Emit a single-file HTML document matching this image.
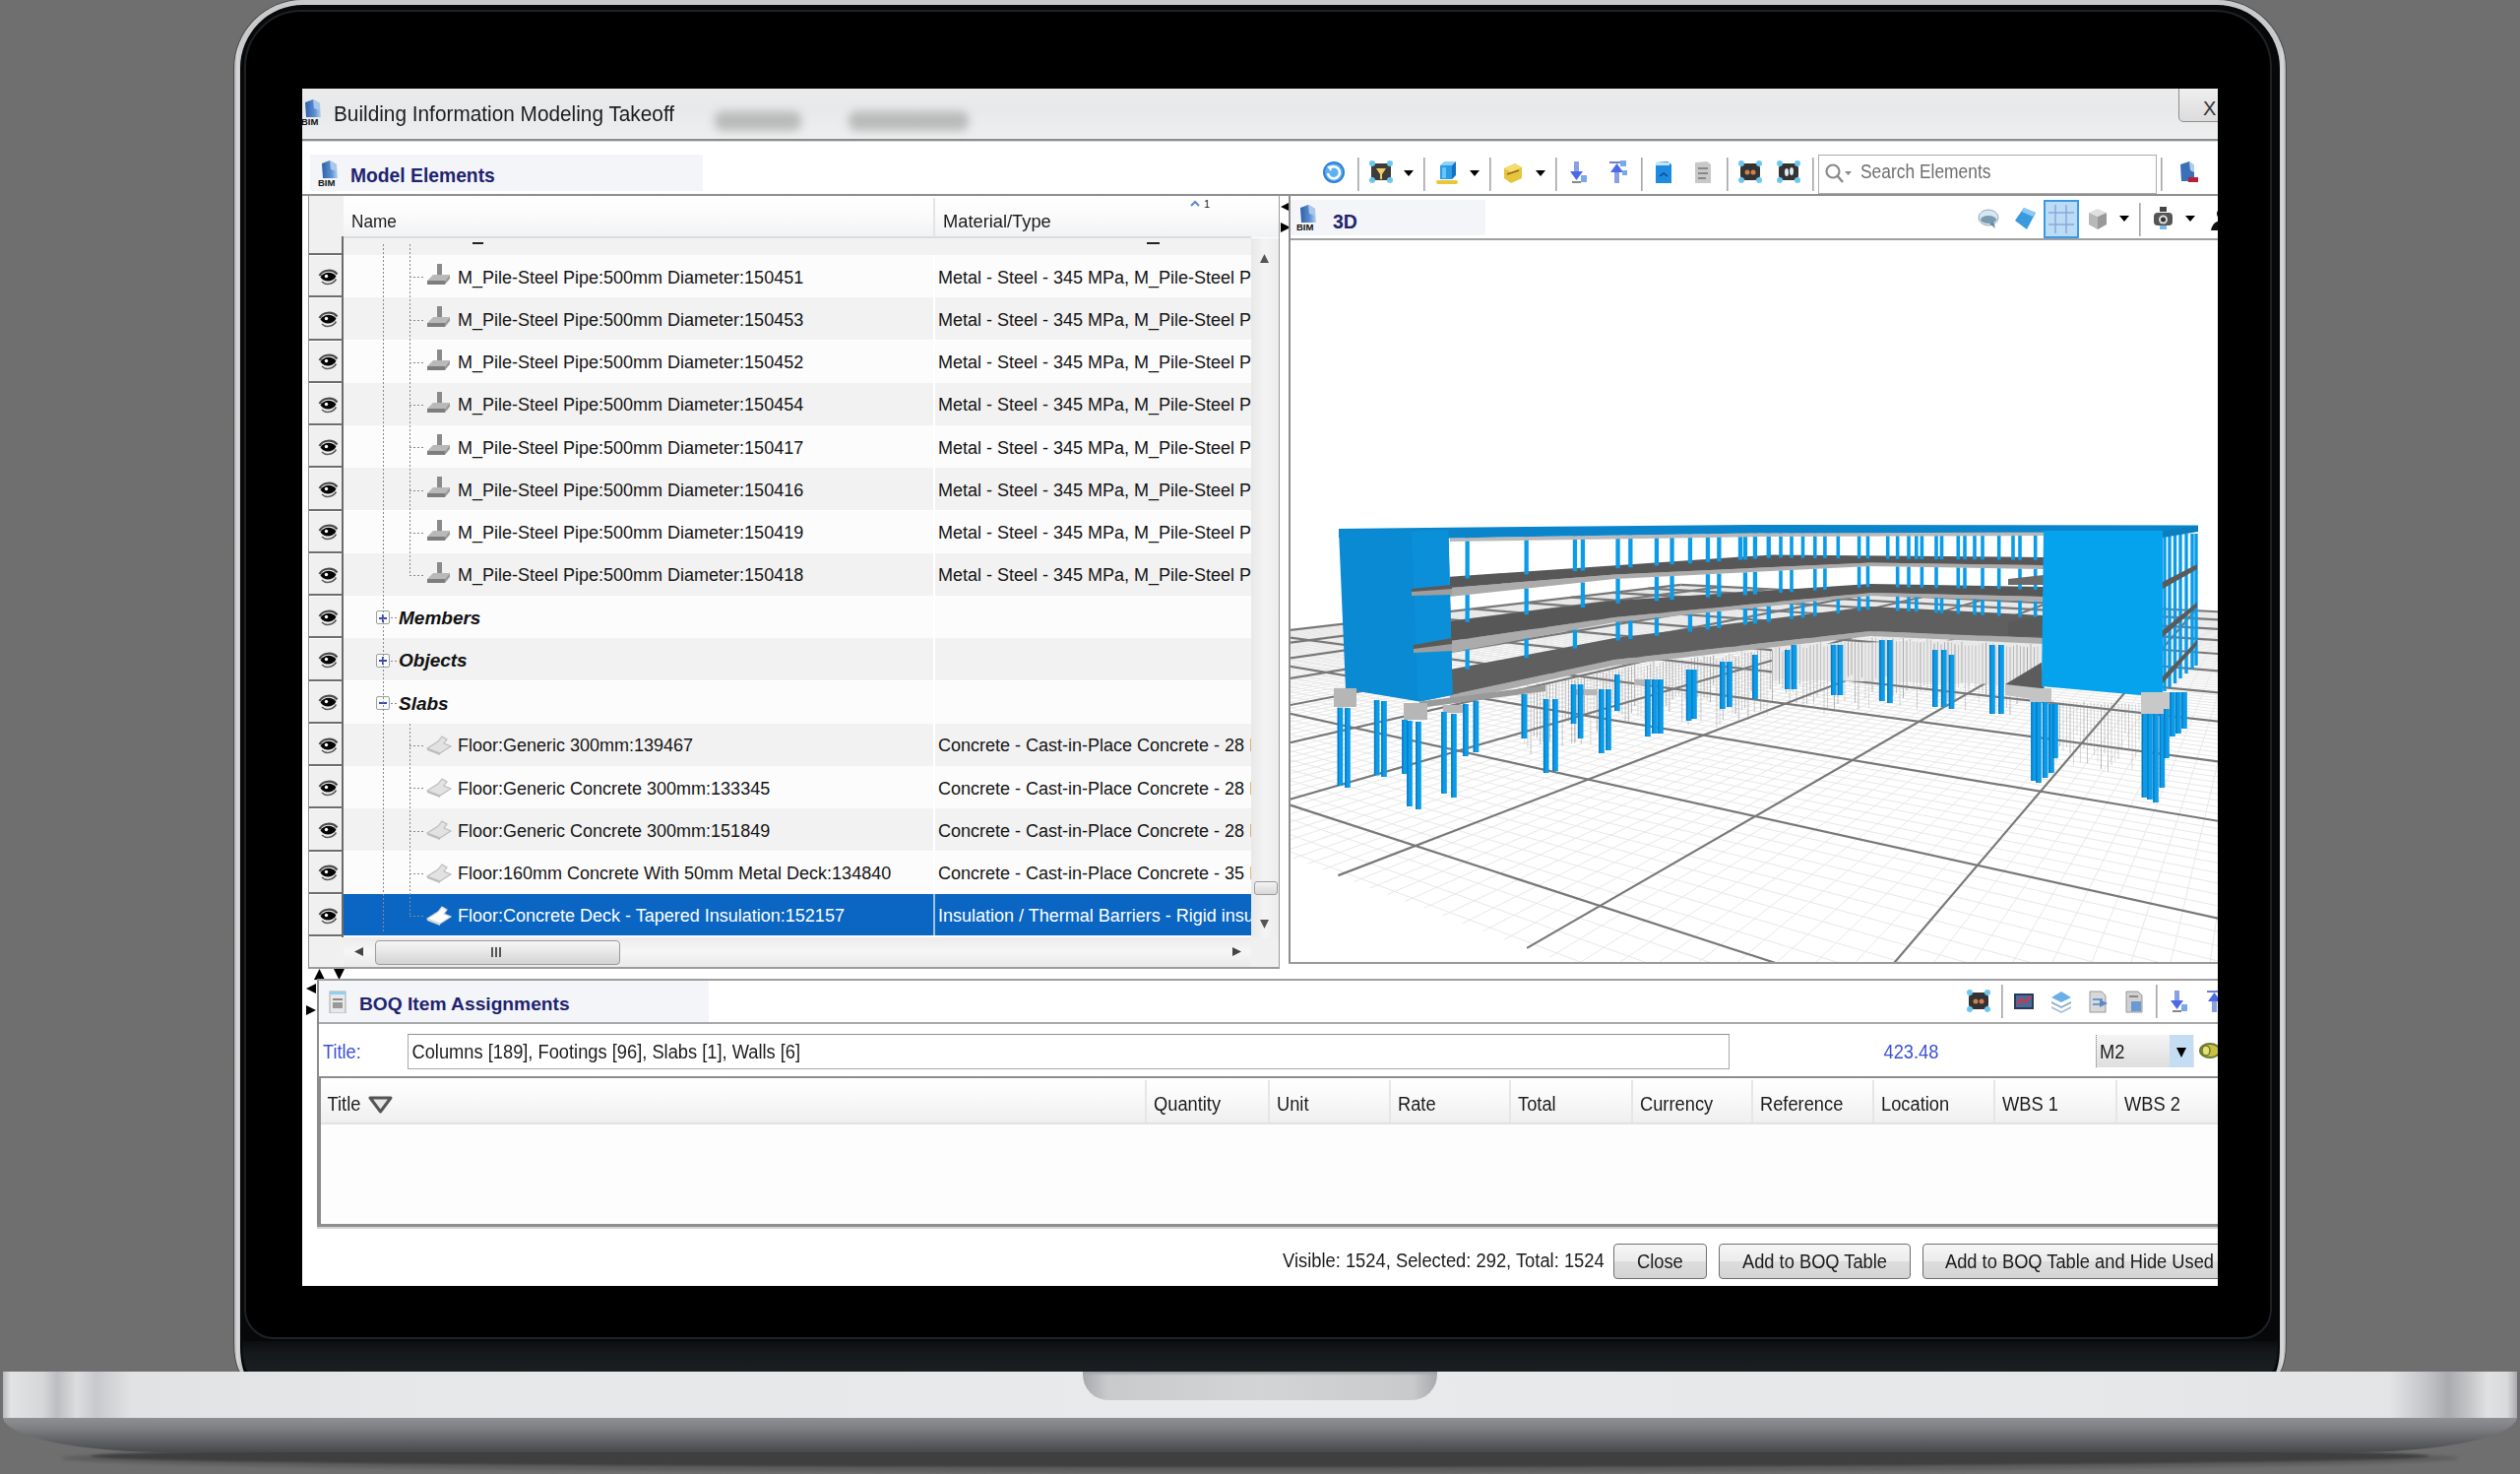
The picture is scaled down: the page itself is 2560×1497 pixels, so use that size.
<!DOCTYPE html>
<html><head><meta charset="utf-8"><title>BIM Takeoff</title>
<style>
html,body{margin:0;padding:0;}
body{width:2560px;height:1497px;overflow:hidden;position:relative;background:#6f6f6f;font-family:"Liberation Sans",sans-serif;}
div,span,svg{position:absolute;}
.t{white-space:pre;line-height:1;}
</style></head><body>
<div style="position:absolute;left:238px;top:0;width:2084px;height:1400px;border-radius:70px 70px 14px 14px/70px 70px 36px 36px;box-shadow:0 0 0 1px rgba(45,45,45,0.55);background:linear-gradient(90deg,#a9aaad 0,#d8d9db 3px,#c9cacc 6px,#c9cacc calc(100% - 6px),#d8d9db calc(100% - 3px),#a9aaad 100%);"></div>
<div style="position:absolute;left:244px;top:5px;width:2072px;height:1395px;border-radius:64px 64px 10px 10px/64px 64px 32px 32px;background:#070809;"></div>
<div style="position:absolute;left:248px;top:10px;width:2060px;height:1350px;border-radius:58px 58px 30px 30px;border:2px solid #1f2124;box-sizing:border-box;background:#000;"></div>
<div style="position:absolute;left:246px;top:1362px;width:2068px;height:32px;background:linear-gradient(180deg,#0c0d0f 0,#16191c 40%,#1b1e22 100%);border-radius:0 0 8px 8px/0 0 30px 30px;"></div>
<div style="position:absolute;left:62px;top:1466px;width:2436px;height:30px;border-radius:50%;background:#5e5e5e;filter:blur(1.5px);"></div>
<div style="position:absolute;left:92px;top:1468px;width:2376px;height:22px;border-radius:50%;background:#3f3f3f;filter:blur(1px);"></div>
<div style="position:absolute;left:3px;top:1393px;width:2554px;height:82px;border-radius:0 0 170px 170px/0 0 36px 36px;background:linear-gradient(180deg,#8e8f93 0,#8e8f93 57%,#7f8084 70%,#626367 85%,#48494d 100%);"></div>
<div style="position:absolute;left:3px;top:1393px;width:2554px;height:47px;background:linear-gradient(90deg,#b9babd 0,#e2e3e5 8px,#d6d7d9 40px,#bdbec1 55px,#dcdddf 75px,#c8c9cc 95px,#e1e2e4 130px,#e6e7e9 400px,#e9eaeb 50%,#e6e7e9 calc(100% - 400px),#e3e4e6 calc(100% - 130px),#c2c3c6 calc(100% - 90px),#a9abae calc(100% - 70px),#c9cacc calc(100% - 45px),#e0e1e3 calc(100% - 30px),#d9dadc calc(100% - 10px),#a9aaad 100%);"></div>
<div style="position:absolute;left:1100px;top:1393px;width:360px;height:29px;border-radius:0 0 26px 26px;background:linear-gradient(90deg,#a8a9ac 0,#c9cacc 25px,#d3d4d5 50%,#c9cacc calc(100% - 25px),#a8a9ac 100%);"></div>
<div style="position:absolute;left:1100px;top:1393px;width:360px;height:4px;background:linear-gradient(180deg,#9fa0a3,rgba(0,0,0,0));"></div>
<div style="position:absolute;left:307px;top:90px;width:1946px;height:1216px;background:#fff;overflow:hidden;"></div>
<div style="left:0;top:0;width:2560px;height:1497px;clip-path:inset(90px 307px 191px 307px)"><div style="left:307.0px;top:90.0px;width:1946.0px;height:52.0px;background:linear-gradient(180deg,#ebebec 0,#e8e9ea 40%,#eeeff0 100%);"></div>
<div style="left:307.0px;top:141.0px;width:1946.0px;height:2.0px;background:#8c8c8c;"></div>
<div style="left:307.0px;top:143.0px;width:1946.0px;height:1.0px;background:#d9d9d9;"></div>
<svg style="left:305px;top:100px" width="24" height="28" viewBox="0 0 24 28"><defs><linearGradient id="bg305100" x1="0" y1="0" x2="1" y2="0"><stop offset="0" stop-color="#2f5fa8"/><stop offset="0.6" stop-color="#5b8fd0"/><stop offset="1" stop-color="#b9d4ee"/></linearGradient></defs><path d="M5 4 L13 1 L20 5 L21 19 L6 19 Z" fill="url(#bg305100)"/><path d="M13 1 L14 10 L20 12 L20 5 Z" fill="#a9c8ea"/><text x="1" y="27" font-family="Liberation Sans" font-weight="bold" font-size="9.5" fill="#111">BIM</text></svg>
<div class="t" style="left:339.0px;top:106.4px;font-size:20.8px;color:#1c1c1c;font-weight:normal;font-style:normal;transform:scaleY(1.1);transform-origin:0 17.61px;">Building Information Modeling Takeoff</div>
<div style="left:726.0px;top:113.0px;width:88.0px;height:20.0px;background:#8a8a8a;filter:blur(5px);border-radius:8px;opacity:0.5"></div>
<div style="left:862.0px;top:113.0px;width:122.0px;height:20.0px;background:#8a8a8a;filter:blur(5px);border-radius:8px;opacity:0.5"></div>
<div style="left:2213.0px;top:88.0px;width:50.0px;height:36.0px;background:linear-gradient(180deg,#f0f0f0,#dcdcdc);border:1px solid #8e8e8e;border-radius:0 0 0 5px;box-sizing:border-box"></div>
<div class="t" style="left:2238.0px;top:100.1px;font-size:20px;color:#333;font-weight:normal;font-style:normal;">X</div>
<div style="left:315.0px;top:157.0px;width:399.0px;height:37.0px;background:#f3f5f8;"></div>
<svg style="left:322px;top:162px" width="24" height="28" viewBox="0 0 24 28"><defs><linearGradient id="bg322162" x1="0" y1="0" x2="1" y2="0"><stop offset="0" stop-color="#2f5fa8"/><stop offset="0.6" stop-color="#5b8fd0"/><stop offset="1" stop-color="#b9d4ee"/></linearGradient></defs><path d="M5 4 L13 1 L20 5 L21 19 L6 19 Z" fill="url(#bg322162)"/><path d="M13 1 L14 10 L20 12 L20 5 Z" fill="#a9c8ea"/><text x="1" y="27" font-family="Liberation Sans" font-weight="bold" font-size="9.5" fill="#111">BIM</text></svg>
<div class="t" style="left:356.0px;top:168.7px;font-size:19.3px;color:#1f2370;font-weight:bold;font-style:normal;">Model Elements</div>
<svg style="left:1343px;top:163px" width="24" height="24" viewBox="0 0 24 24"><circle cx="12" cy="12" r="11" fill="#2e7fd8"/><circle cx="12" cy="12" r="9" fill="#5fb0f0"/><path d="M6 13 A6 6 0 1 0 9 7" stroke="#fff" stroke-width="2.5" fill="none"/><polygon points="5,6 11,5 9,11" fill="#fff"/></svg>
<div style="left:1379.0px;top:160.0px;width:2.0px;height:34.0px;background:linear-gradient(90deg,#9a9a9a,#d5d5d5);"></div>
<svg style="left:1391px;top:163px" width="24" height="24" viewBox="0 0 24 24"><rect x="2" y="3" width="20" height="17" rx="4" fill="#3c3c3c"/><circle cx="3" cy="3" r="3" fill="#6cc7f0"/><circle cx="21" cy="3" r="3" fill="#6cc7f0"/><circle cx="3" cy="20" r="3" fill="#6cc7f0"/><circle cx="21" cy="20" r="3" fill="#6cc7f0"/><polygon points="7,8 17,8 13,14 13,19 11,19 11,14" fill="#f0d060"/></svg>
<svg style="left:1426px;top:173px" width="10" height="6" viewBox="0 0 10 6"><polygon points="0,0 10,0 5,6" fill="#000"/></svg>
<div style="left:1446.0px;top:160.0px;width:2.0px;height:34.0px;background:linear-gradient(90deg,#9a9a9a,#d5d5d5);"></div>
<svg style="left:1458px;top:163px" width="24" height="24" viewBox="0 0 24 24"><polygon points="5,5 9,1 21,1 17,5" fill="#8fd0f8"/><rect x="5" y="5" width="12" height="14" fill="#2a9be8"/><polygon points="17,5 21,1 21,15 17,19" fill="#1470c0"/><rect x="7" y="7" width="4" height="11" fill="#6cc4f4"/><rect x="1" y="20" width="22" height="4" rx="2" fill="#e8c83a"/></svg>
<svg style="left:1493px;top:173px" width="10" height="6" viewBox="0 0 10 6"><polygon points="0,0 10,0 5,6" fill="#000"/></svg>
<div style="left:1513.0px;top:160.0px;width:2.0px;height:34.0px;background:linear-gradient(90deg,#9a9a9a,#d5d5d5);"></div>
<svg style="left:1525px;top:163px" width="24" height="24" viewBox="0 0 24 24"><polygon points="3,8 14,3 21,7 21,18 10,23 3,18" fill="#e6c43c"/><polygon points="3,8 14,3 21,7 10,12" fill="#f6dc70"/><path d="M6 14 L18 10" stroke="#8a6a20" stroke-width="1.5"/></svg>
<svg style="left:1560px;top:173px" width="10" height="6" viewBox="0 0 10 6"><polygon points="0,0 10,0 5,6" fill="#000"/></svg>
<div style="left:1580.0px;top:160.0px;width:2.0px;height:34.0px;background:linear-gradient(90deg,#9a9a9a,#d5d5d5);"></div>
<svg style="left:1590px;top:163px" width="24" height="24" viewBox="0 0 24 24"><rect x="9" y="1" width="5" height="12" fill="#8aa0e0"/><polygon points="5,11 18,11 11.5,20" fill="#4a6ae8"/><rect x="7" y="21" width="9" height="2" fill="#888"/><rect x="16" y="15" width="6" height="7" fill="#7aa8e8"/></svg>
<svg style="left:1631px;top:163px" width="24" height="24" viewBox="0 0 24 24"><rect x="9" y="11" width="5" height="12" fill="#8aa0e0"/><polygon points="5,12 18,12 11.5,3" fill="#4a6ae8"/><rect x="4" y="1" width="14" height="2" fill="#7080d0"/><rect x="15" y="0" width="6" height="6" fill="#7aa8e8"/><rect x="17" y="10" width="5" height="5" fill="#7aa8e8"/></svg>
<div style="left:1667.0px;top:160.0px;width:2.0px;height:34.0px;background:linear-gradient(90deg,#9a9a9a,#d5d5d5);"></div>
<svg style="left:1678px;top:163px" width="24" height="24" viewBox="0 0 24 24"><polygon points="4,2 16,1 20,4 20,23 4,23" fill="#1e8ae0"/><rect x="4" y="2" width="14" height="3" fill="#c8e4f8"/><path d="M8 16 L12 13 L16 16" stroke="#0a4a90" stroke-width="1.5" fill="none"/></svg>
<svg style="left:1718px;top:163px" width="24" height="24" viewBox="0 0 24 24"><polygon points="4,2 16,1 20,4 20,23 4,23" fill="#c8c8c8"/><rect x="7" y="7" width="10" height="2" fill="#888"/><rect x="7" y="12" width="10" height="2" fill="#888"/><rect x="7" y="17" width="8" height="2" fill="#888"/></svg>
<div style="left:1754.0px;top:160.0px;width:2.0px;height:34.0px;background:linear-gradient(90deg,#9a9a9a,#d5d5d5);"></div>
<svg style="left:1766px;top:163px" width="24" height="24" viewBox="0 0 24 24"><rect x="2" y="3" width="20" height="17" rx="5" fill="#333"/><circle cx="3" cy="3" r="3" fill="#6cc7f0"/><circle cx="21" cy="3" r="3" fill="#6cc7f0"/><circle cx="3" cy="20" r="3" fill="#6cc7f0"/><circle cx="21" cy="20" r="3" fill="#6cc7f0"/><circle cx="9" cy="12" r="2.5" fill="#d08050"/><circle cx="15" cy="12" r="2.5" fill="#d08050"/></svg>
<svg style="left:1805px;top:163px" width="24" height="24" viewBox="0 0 24 24"><rect x="2" y="3" width="20" height="17" rx="5" fill="#333"/><circle cx="3" cy="3" r="3" fill="#6cc7f0"/><circle cx="21" cy="3" r="3" fill="#6cc7f0"/><circle cx="3" cy="20" r="3" fill="#6cc7f0"/><circle cx="21" cy="20" r="3" fill="#6cc7f0"/><ellipse cx="10" cy="12" rx="2" ry="4" fill="#e0e8f0"/><ellipse cx="15" cy="11" rx="2" ry="4" fill="#e0e8f0"/></svg>
<div style="left:1841.0px;top:160.0px;width:2.0px;height:34.0px;background:linear-gradient(90deg,#9a9a9a,#d5d5d5);"></div>
<div style="left:1847.0px;top:157.0px;width:344.0px;height:40.0px;background:#fff;border:1px solid #ababab;box-sizing:border-box"></div>
<svg style="left:1853px;top:165px" width="34" height="24" viewBox="0 0 34 24"><circle cx="9" cy="9" r="6.5" stroke="#8a8a8a" stroke-width="2.2" fill="none"/><line x1="13.5" y1="13.5" x2="19" y2="20" stroke="#8a8a8a" stroke-width="2.5"/><polygon points="21,9 28,9 24.5,13" fill="#8a8a8a"/></svg>
<div class="t" style="left:1890.0px;top:166.8px;font-size:17.4px;color:#6e6e6e;font-weight:normal;font-style:normal;transform:scaleY(1.12);transform-origin:0 14.73px;">Search Elements</div>
<div style="left:2195.0px;top:160.0px;width:2.0px;height:34.0px;background:linear-gradient(90deg,#9a9a9a,#d5d5d5);"></div>
<svg style="left:2210px;top:163px" width="24" height="24" viewBox="0 0 24 24"><polygon points="5,4 14,1 19,5 19,21 6,21" fill="#3a70b8"/><polygon points="14,1 15,10 19,12 19,5" fill="#b0cdea"/><rect x="13" y="17" width="10" height="5" fill="#b8203a"/></svg>
<svg style="left:2250px;top:163px" width="24" height="24" viewBox="0 0 24 24"><polygon points="5,4 14,1 19,5 19,21 6,21" fill="#3a70b8"/><polygon points="14,1 15,10 19,12 19,5" fill="#b0cdea"/><rect x="13" y="17" width="10" height="5" fill="#b8203a"/></svg>
<div style="left:307.0px;top:197.0px;width:1946.0px;height:2.0px;background:#8f8f8f;"></div>
<div style="left:313.0px;top:199.0px;width:1.0px;height:785.0px;background:#8e9399;"></div>
<div style="left:1299.0px;top:199.0px;width:1.0px;height:785.0px;background:#9a9a9a;"></div>
<div style="left:313.0px;top:982.0px;width:987.0px;height:2.0px;background:#9b9b9b;"></div>
<div style="left:314.0px;top:199.0px;width:985.0px;height:42.0px;background:linear-gradient(180deg,#ffffff 0,#fbfbfc 45%,#f1f2f4 100%);"></div>
<div style="left:314.0px;top:199.0px;width:35.0px;height:60.0px;background:#f0f0f0;"></div>
<div style="left:314.0px;top:257.0px;width:35.0px;height:2.0px;background:#6e6e6e;"></div>
<div style="left:349.0px;top:240.0px;width:922.0px;height:2.0px;background:#dcdcdc;"></div>
<div style="left:948.0px;top:201.0px;width:2.0px;height:40.0px;background:#e4e4e4;"></div>
<div class="t" style="left:357.0px;top:216.7px;font-size:17.2px;color:#1b1b1b;font-weight:normal;font-style:normal;transform:scaleY(1.08);transform-origin:0 14.56px;">Name</div>
<div class="t" style="left:958.0px;top:215.8px;font-size:18.3px;color:#1b1b1b;font-weight:normal;font-style:normal;transform:scaleY(1.05);transform-origin:0 15.49px;">Material/Type</div>
<svg style="left:1208px;top:201px" width="26" height="12" viewBox="0 0 26 12"><polyline points="2,8 6,4 10,8" stroke="#5a8ad0" stroke-width="2" fill="none"/><text x="15" y="10" font-family="Liberation Sans" font-size="11" fill="#222">1</text></svg>
<div style="left:349.0px;top:242.0px;width:922.0px;height:18.0px;background:#f2f2f2;"></div>
<div style="left:480.0px;top:246.0px;width:11.0px;height:2.0px;background:#222;"></div>
<div style="left:1165.0px;top:246.0px;width:13.0px;height:2.0px;background:#222;"></div>
<div style="left:347.0px;top:240.0px;width:2.0px;height:712.0px;background:#6b6b6b;"></div>
<div style="left:349.0px;top:259.0px;width:922.0px;height:43.2px;background:#fcfcfc;"></div>
<div style="left:948.0px;top:259.0px;width:2.0px;height:43.2px;background:#ffffff;"></div>
<div style="left:314.0px;top:259.0px;width:33.0px;height:43.2px;background:#f0f0f0;border-top:1px solid #fff;border-left:1px solid #fafafa;box-sizing:border-box"></div>
<div style="left:314.0px;top:300.2px;width:35.0px;height:2.0px;background:#6e6e6e;"></div>
<svg style="left:323px;top:271.9px" width="21" height="19" viewBox="0 0 21 19"><path d="M1.5 8 C5 1.5 15 1 19.5 6.5" stroke="#4a4a4a" stroke-width="2.2" fill="none"/><path d="M2.5 9.5 C6 3.5 14.5 3.5 18.5 8.5 C15.5 14.5 6.5 15.5 2.5 9.5 Z" fill="#050505"/><path d="M4 14 C8 18 15 17 18.5 11.5" stroke="#5a5a5a" stroke-width="1.6" fill="none"/><circle cx="8.5" cy="8.5" r="1.7" fill="#fff"/></svg>
<div style="left:416.0px;top:281.4px;width:14.0px;height:1.0px;background:repeating-linear-gradient(90deg,#8a8a8a 0 2px,transparent 2px 4px);"></div>
<svg style="left:433px;top:267.0px" width="26" height="23" viewBox="0 0 26 23"><rect x="11" y="1" width="5" height="11" fill="#8a8a8a"/><path d="M1 18 L7 12 L24 12 L19 18 Z" fill="#b9b9b9"/><path d="M1 18 L19 18 L19 22 L1 22 Z" fill="#7d7d7d"/><path d="M19 18 L24 12 L24 16 L19 22 Z" fill="#9a9a9a"/></svg>
<div class="t" style="left:465.0px;top:272.5px;font-size:18px;color:#141414;font-weight:normal;font-style:normal;">M_Pile-Steel Pipe:500mm Diameter:150451</div>
<div style="left:951px;top:259.0px;width:320px;height:43.25px;overflow:hidden"><div class="t" style="left:2.0px;top:13.5px;font-size:18px;color:#141414;font-weight:normal;font-style:normal;">Metal - Steel - 345 MPa, M_Pile-Steel P</div></div>
<div style="left:349.0px;top:302.2px;width:922.0px;height:43.2px;background:#f2f2f2;"></div>
<div style="left:948.0px;top:302.2px;width:2.0px;height:43.2px;background:#ffffff;"></div>
<div style="left:314.0px;top:302.2px;width:33.0px;height:43.2px;background:#f0f0f0;border-top:1px solid #fff;border-left:1px solid #fafafa;box-sizing:border-box"></div>
<div style="left:314.0px;top:343.5px;width:35.0px;height:2.0px;background:#6e6e6e;"></div>
<svg style="left:323px;top:315.15px" width="21" height="19" viewBox="0 0 21 19"><path d="M1.5 8 C5 1.5 15 1 19.5 6.5" stroke="#4a4a4a" stroke-width="2.2" fill="none"/><path d="M2.5 9.5 C6 3.5 14.5 3.5 18.5 8.5 C15.5 14.5 6.5 15.5 2.5 9.5 Z" fill="#050505"/><path d="M4 14 C8 18 15 17 18.5 11.5" stroke="#5a5a5a" stroke-width="1.6" fill="none"/><circle cx="8.5" cy="8.5" r="1.7" fill="#fff"/></svg>
<div style="left:416.0px;top:324.6px;width:14.0px;height:1.0px;background:repeating-linear-gradient(90deg,#8a8a8a 0 2px,transparent 2px 4px);"></div>
<svg style="left:433px;top:310.25px" width="26" height="23" viewBox="0 0 26 23"><rect x="11" y="1" width="5" height="11" fill="#8a8a8a"/><path d="M1 18 L7 12 L24 12 L19 18 Z" fill="#b9b9b9"/><path d="M1 18 L19 18 L19 22 L1 22 Z" fill="#7d7d7d"/><path d="M19 18 L24 12 L24 16 L19 22 Z" fill="#9a9a9a"/></svg>
<div class="t" style="left:465.0px;top:315.7px;font-size:18px;color:#141414;font-weight:normal;font-style:normal;">M_Pile-Steel Pipe:500mm Diameter:150453</div>
<div style="left:951px;top:302.25px;width:320px;height:43.25px;overflow:hidden"><div class="t" style="left:2.0px;top:13.5px;font-size:18px;color:#141414;font-weight:normal;font-style:normal;">Metal - Steel - 345 MPa, M_Pile-Steel P</div></div>
<div style="left:349.0px;top:345.5px;width:922.0px;height:43.2px;background:#fcfcfc;"></div>
<div style="left:948.0px;top:345.5px;width:2.0px;height:43.2px;background:#ffffff;"></div>
<div style="left:314.0px;top:345.5px;width:33.0px;height:43.2px;background:#f0f0f0;border-top:1px solid #fff;border-left:1px solid #fafafa;box-sizing:border-box"></div>
<div style="left:314.0px;top:386.8px;width:35.0px;height:2.0px;background:#6e6e6e;"></div>
<svg style="left:323px;top:358.4px" width="21" height="19" viewBox="0 0 21 19"><path d="M1.5 8 C5 1.5 15 1 19.5 6.5" stroke="#4a4a4a" stroke-width="2.2" fill="none"/><path d="M2.5 9.5 C6 3.5 14.5 3.5 18.5 8.5 C15.5 14.5 6.5 15.5 2.5 9.5 Z" fill="#050505"/><path d="M4 14 C8 18 15 17 18.5 11.5" stroke="#5a5a5a" stroke-width="1.6" fill="none"/><circle cx="8.5" cy="8.5" r="1.7" fill="#fff"/></svg>
<div style="left:416.0px;top:367.9px;width:14.0px;height:1.0px;background:repeating-linear-gradient(90deg,#8a8a8a 0 2px,transparent 2px 4px);"></div>
<svg style="left:433px;top:353.5px" width="26" height="23" viewBox="0 0 26 23"><rect x="11" y="1" width="5" height="11" fill="#8a8a8a"/><path d="M1 18 L7 12 L24 12 L19 18 Z" fill="#b9b9b9"/><path d="M1 18 L19 18 L19 22 L1 22 Z" fill="#7d7d7d"/><path d="M19 18 L24 12 L24 16 L19 22 Z" fill="#9a9a9a"/></svg>
<div class="t" style="left:465.0px;top:359.0px;font-size:18px;color:#141414;font-weight:normal;font-style:normal;">M_Pile-Steel Pipe:500mm Diameter:150452</div>
<div style="left:951px;top:345.5px;width:320px;height:43.25px;overflow:hidden"><div class="t" style="left:2.0px;top:13.5px;font-size:18px;color:#141414;font-weight:normal;font-style:normal;">Metal - Steel - 345 MPa, M_Pile-Steel P</div></div>
<div style="left:349.0px;top:388.8px;width:922.0px;height:43.2px;background:#f2f2f2;"></div>
<div style="left:948.0px;top:388.8px;width:2.0px;height:43.2px;background:#ffffff;"></div>
<div style="left:314.0px;top:388.8px;width:33.0px;height:43.2px;background:#f0f0f0;border-top:1px solid #fff;border-left:1px solid #fafafa;box-sizing:border-box"></div>
<div style="left:314.0px;top:430.0px;width:35.0px;height:2.0px;background:#6e6e6e;"></div>
<svg style="left:323px;top:401.65px" width="21" height="19" viewBox="0 0 21 19"><path d="M1.5 8 C5 1.5 15 1 19.5 6.5" stroke="#4a4a4a" stroke-width="2.2" fill="none"/><path d="M2.5 9.5 C6 3.5 14.5 3.5 18.5 8.5 C15.5 14.5 6.5 15.5 2.5 9.5 Z" fill="#050505"/><path d="M4 14 C8 18 15 17 18.5 11.5" stroke="#5a5a5a" stroke-width="1.6" fill="none"/><circle cx="8.5" cy="8.5" r="1.7" fill="#fff"/></svg>
<div style="left:416.0px;top:411.1px;width:14.0px;height:1.0px;background:repeating-linear-gradient(90deg,#8a8a8a 0 2px,transparent 2px 4px);"></div>
<svg style="left:433px;top:396.75px" width="26" height="23" viewBox="0 0 26 23"><rect x="11" y="1" width="5" height="11" fill="#8a8a8a"/><path d="M1 18 L7 12 L24 12 L19 18 Z" fill="#b9b9b9"/><path d="M1 18 L19 18 L19 22 L1 22 Z" fill="#7d7d7d"/><path d="M19 18 L24 12 L24 16 L19 22 Z" fill="#9a9a9a"/></svg>
<div class="t" style="left:465.0px;top:402.2px;font-size:18px;color:#141414;font-weight:normal;font-style:normal;">M_Pile-Steel Pipe:500mm Diameter:150454</div>
<div style="left:951px;top:388.75px;width:320px;height:43.25px;overflow:hidden"><div class="t" style="left:2.0px;top:13.5px;font-size:18px;color:#141414;font-weight:normal;font-style:normal;">Metal - Steel - 345 MPa, M_Pile-Steel P</div></div>
<div style="left:349.0px;top:432.0px;width:922.0px;height:43.2px;background:#fcfcfc;"></div>
<div style="left:948.0px;top:432.0px;width:2.0px;height:43.2px;background:#ffffff;"></div>
<div style="left:314.0px;top:432.0px;width:33.0px;height:43.2px;background:#f0f0f0;border-top:1px solid #fff;border-left:1px solid #fafafa;box-sizing:border-box"></div>
<div style="left:314.0px;top:473.2px;width:35.0px;height:2.0px;background:#6e6e6e;"></div>
<svg style="left:323px;top:444.9px" width="21" height="19" viewBox="0 0 21 19"><path d="M1.5 8 C5 1.5 15 1 19.5 6.5" stroke="#4a4a4a" stroke-width="2.2" fill="none"/><path d="M2.5 9.5 C6 3.5 14.5 3.5 18.5 8.5 C15.5 14.5 6.5 15.5 2.5 9.5 Z" fill="#050505"/><path d="M4 14 C8 18 15 17 18.5 11.5" stroke="#5a5a5a" stroke-width="1.6" fill="none"/><circle cx="8.5" cy="8.5" r="1.7" fill="#fff"/></svg>
<div style="left:416.0px;top:454.4px;width:14.0px;height:1.0px;background:repeating-linear-gradient(90deg,#8a8a8a 0 2px,transparent 2px 4px);"></div>
<svg style="left:433px;top:440.0px" width="26" height="23" viewBox="0 0 26 23"><rect x="11" y="1" width="5" height="11" fill="#8a8a8a"/><path d="M1 18 L7 12 L24 12 L19 18 Z" fill="#b9b9b9"/><path d="M1 18 L19 18 L19 22 L1 22 Z" fill="#7d7d7d"/><path d="M19 18 L24 12 L24 16 L19 22 Z" fill="#9a9a9a"/></svg>
<div class="t" style="left:465.0px;top:445.5px;font-size:18px;color:#141414;font-weight:normal;font-style:normal;">M_Pile-Steel Pipe:500mm Diameter:150417</div>
<div style="left:951px;top:432.0px;width:320px;height:43.25px;overflow:hidden"><div class="t" style="left:2.0px;top:13.5px;font-size:18px;color:#141414;font-weight:normal;font-style:normal;">Metal - Steel - 345 MPa, M_Pile-Steel P</div></div>
<div style="left:349.0px;top:475.2px;width:922.0px;height:43.2px;background:#f2f2f2;"></div>
<div style="left:948.0px;top:475.2px;width:2.0px;height:43.2px;background:#ffffff;"></div>
<div style="left:314.0px;top:475.2px;width:33.0px;height:43.2px;background:#f0f0f0;border-top:1px solid #fff;border-left:1px solid #fafafa;box-sizing:border-box"></div>
<div style="left:314.0px;top:516.5px;width:35.0px;height:2.0px;background:#6e6e6e;"></div>
<svg style="left:323px;top:488.15px" width="21" height="19" viewBox="0 0 21 19"><path d="M1.5 8 C5 1.5 15 1 19.5 6.5" stroke="#4a4a4a" stroke-width="2.2" fill="none"/><path d="M2.5 9.5 C6 3.5 14.5 3.5 18.5 8.5 C15.5 14.5 6.5 15.5 2.5 9.5 Z" fill="#050505"/><path d="M4 14 C8 18 15 17 18.5 11.5" stroke="#5a5a5a" stroke-width="1.6" fill="none"/><circle cx="8.5" cy="8.5" r="1.7" fill="#fff"/></svg>
<div style="left:416.0px;top:497.6px;width:14.0px;height:1.0px;background:repeating-linear-gradient(90deg,#8a8a8a 0 2px,transparent 2px 4px);"></div>
<svg style="left:433px;top:483.25px" width="26" height="23" viewBox="0 0 26 23"><rect x="11" y="1" width="5" height="11" fill="#8a8a8a"/><path d="M1 18 L7 12 L24 12 L19 18 Z" fill="#b9b9b9"/><path d="M1 18 L19 18 L19 22 L1 22 Z" fill="#7d7d7d"/><path d="M19 18 L24 12 L24 16 L19 22 Z" fill="#9a9a9a"/></svg>
<div class="t" style="left:465.0px;top:488.7px;font-size:18px;color:#141414;font-weight:normal;font-style:normal;">M_Pile-Steel Pipe:500mm Diameter:150416</div>
<div style="left:951px;top:475.25px;width:320px;height:43.25px;overflow:hidden"><div class="t" style="left:2.0px;top:13.5px;font-size:18px;color:#141414;font-weight:normal;font-style:normal;">Metal - Steel - 345 MPa, M_Pile-Steel P</div></div>
<div style="left:349.0px;top:518.5px;width:922.0px;height:43.2px;background:#fcfcfc;"></div>
<div style="left:948.0px;top:518.5px;width:2.0px;height:43.2px;background:#ffffff;"></div>
<div style="left:314.0px;top:518.5px;width:33.0px;height:43.2px;background:#f0f0f0;border-top:1px solid #fff;border-left:1px solid #fafafa;box-sizing:border-box"></div>
<div style="left:314.0px;top:559.8px;width:35.0px;height:2.0px;background:#6e6e6e;"></div>
<svg style="left:323px;top:531.4px" width="21" height="19" viewBox="0 0 21 19"><path d="M1.5 8 C5 1.5 15 1 19.5 6.5" stroke="#4a4a4a" stroke-width="2.2" fill="none"/><path d="M2.5 9.5 C6 3.5 14.5 3.5 18.5 8.5 C15.5 14.5 6.5 15.5 2.5 9.5 Z" fill="#050505"/><path d="M4 14 C8 18 15 17 18.5 11.5" stroke="#5a5a5a" stroke-width="1.6" fill="none"/><circle cx="8.5" cy="8.5" r="1.7" fill="#fff"/></svg>
<div style="left:416.0px;top:540.9px;width:14.0px;height:1.0px;background:repeating-linear-gradient(90deg,#8a8a8a 0 2px,transparent 2px 4px);"></div>
<svg style="left:433px;top:526.5px" width="26" height="23" viewBox="0 0 26 23"><rect x="11" y="1" width="5" height="11" fill="#8a8a8a"/><path d="M1 18 L7 12 L24 12 L19 18 Z" fill="#b9b9b9"/><path d="M1 18 L19 18 L19 22 L1 22 Z" fill="#7d7d7d"/><path d="M19 18 L24 12 L24 16 L19 22 Z" fill="#9a9a9a"/></svg>
<div class="t" style="left:465.0px;top:532.0px;font-size:18px;color:#141414;font-weight:normal;font-style:normal;">M_Pile-Steel Pipe:500mm Diameter:150419</div>
<div style="left:951px;top:518.5px;width:320px;height:43.25px;overflow:hidden"><div class="t" style="left:2.0px;top:13.5px;font-size:18px;color:#141414;font-weight:normal;font-style:normal;">Metal - Steel - 345 MPa, M_Pile-Steel P</div></div>
<div style="left:349.0px;top:561.8px;width:922.0px;height:43.2px;background:#f2f2f2;"></div>
<div style="left:948.0px;top:561.8px;width:2.0px;height:43.2px;background:#ffffff;"></div>
<div style="left:314.0px;top:561.8px;width:33.0px;height:43.2px;background:#f0f0f0;border-top:1px solid #fff;border-left:1px solid #fafafa;box-sizing:border-box"></div>
<div style="left:314.0px;top:603.0px;width:35.0px;height:2.0px;background:#6e6e6e;"></div>
<svg style="left:323px;top:574.65px" width="21" height="19" viewBox="0 0 21 19"><path d="M1.5 8 C5 1.5 15 1 19.5 6.5" stroke="#4a4a4a" stroke-width="2.2" fill="none"/><path d="M2.5 9.5 C6 3.5 14.5 3.5 18.5 8.5 C15.5 14.5 6.5 15.5 2.5 9.5 Z" fill="#050505"/><path d="M4 14 C8 18 15 17 18.5 11.5" stroke="#5a5a5a" stroke-width="1.6" fill="none"/><circle cx="8.5" cy="8.5" r="1.7" fill="#fff"/></svg>
<div style="left:416.0px;top:584.1px;width:14.0px;height:1.0px;background:repeating-linear-gradient(90deg,#8a8a8a 0 2px,transparent 2px 4px);"></div>
<svg style="left:433px;top:569.75px" width="26" height="23" viewBox="0 0 26 23"><rect x="11" y="1" width="5" height="11" fill="#8a8a8a"/><path d="M1 18 L7 12 L24 12 L19 18 Z" fill="#b9b9b9"/><path d="M1 18 L19 18 L19 22 L1 22 Z" fill="#7d7d7d"/><path d="M19 18 L24 12 L24 16 L19 22 Z" fill="#9a9a9a"/></svg>
<div class="t" style="left:465.0px;top:575.2px;font-size:18px;color:#141414;font-weight:normal;font-style:normal;">M_Pile-Steel Pipe:500mm Diameter:150418</div>
<div style="left:951px;top:561.75px;width:320px;height:43.25px;overflow:hidden"><div class="t" style="left:2.0px;top:13.5px;font-size:18px;color:#141414;font-weight:normal;font-style:normal;">Metal - Steel - 345 MPa, M_Pile-Steel P</div></div>
<div style="left:349.0px;top:605.0px;width:922.0px;height:43.2px;background:#fcfcfc;"></div>
<div style="left:948.0px;top:605.0px;width:2.0px;height:43.2px;background:#ffffff;"></div>
<div style="left:314.0px;top:605.0px;width:33.0px;height:43.2px;background:#f0f0f0;border-top:1px solid #fff;border-left:1px solid #fafafa;box-sizing:border-box"></div>
<div style="left:314.0px;top:646.2px;width:35.0px;height:2.0px;background:#6e6e6e;"></div>
<svg style="left:323px;top:617.9px" width="21" height="19" viewBox="0 0 21 19"><path d="M1.5 8 C5 1.5 15 1 19.5 6.5" stroke="#4a4a4a" stroke-width="2.2" fill="none"/><path d="M2.5 9.5 C6 3.5 14.5 3.5 18.5 8.5 C15.5 14.5 6.5 15.5 2.5 9.5 Z" fill="#050505"/><path d="M4 14 C8 18 15 17 18.5 11.5" stroke="#5a5a5a" stroke-width="1.6" fill="none"/><circle cx="8.5" cy="8.5" r="1.7" fill="#fff"/></svg>
<div style="left:382.0px;top:620.4px;width:14.0px;height:14.0px;background:#fafafa;border:1px solid #9aa0a8;box-sizing:border-box;border-radius:2px"></div>
<div style="left:385.0px;top:626.6px;width:8.0px;height:2.0px;background:#3a4ab0;"></div>
<div style="left:388.0px;top:623.6px;width:2.0px;height:8.0px;background:#3a4ab0;"></div>
<div style="left:397.0px;top:627.4px;width:7.0px;height:1.0px;background:repeating-linear-gradient(90deg,#8a8a8a 0 2px,transparent 2px 4px);"></div>
<div class="t" style="left:405.0px;top:618.1px;font-size:19px;color:#111;font-weight:bold;font-style:italic;">Members</div>
<div style="left:349.0px;top:648.2px;width:922.0px;height:43.2px;background:#f2f2f2;"></div>
<div style="left:948.0px;top:648.2px;width:2.0px;height:43.2px;background:#ffffff;"></div>
<div style="left:314.0px;top:648.2px;width:33.0px;height:43.2px;background:#f0f0f0;border-top:1px solid #fff;border-left:1px solid #fafafa;box-sizing:border-box"></div>
<div style="left:314.0px;top:689.5px;width:35.0px;height:2.0px;background:#6e6e6e;"></div>
<svg style="left:323px;top:661.15px" width="21" height="19" viewBox="0 0 21 19"><path d="M1.5 8 C5 1.5 15 1 19.5 6.5" stroke="#4a4a4a" stroke-width="2.2" fill="none"/><path d="M2.5 9.5 C6 3.5 14.5 3.5 18.5 8.5 C15.5 14.5 6.5 15.5 2.5 9.5 Z" fill="#050505"/><path d="M4 14 C8 18 15 17 18.5 11.5" stroke="#5a5a5a" stroke-width="1.6" fill="none"/><circle cx="8.5" cy="8.5" r="1.7" fill="#fff"/></svg>
<div style="left:382.0px;top:663.6px;width:14.0px;height:14.0px;background:#fafafa;border:1px solid #9aa0a8;box-sizing:border-box;border-radius:2px"></div>
<div style="left:385.0px;top:669.9px;width:8.0px;height:2.0px;background:#3a4ab0;"></div>
<div style="left:388.0px;top:666.9px;width:2.0px;height:8.0px;background:#3a4ab0;"></div>
<div style="left:397.0px;top:670.6px;width:7.0px;height:1.0px;background:repeating-linear-gradient(90deg,#8a8a8a 0 2px,transparent 2px 4px);"></div>
<div class="t" style="left:405.0px;top:661.4px;font-size:19px;color:#111;font-weight:bold;font-style:italic;">Objects</div>
<div style="left:349.0px;top:691.5px;width:922.0px;height:43.2px;background:#fcfcfc;"></div>
<div style="left:948.0px;top:691.5px;width:2.0px;height:43.2px;background:#ffffff;"></div>
<div style="left:314.0px;top:691.5px;width:33.0px;height:43.2px;background:#f0f0f0;border-top:1px solid #fff;border-left:1px solid #fafafa;box-sizing:border-box"></div>
<div style="left:314.0px;top:732.8px;width:35.0px;height:2.0px;background:#6e6e6e;"></div>
<svg style="left:323px;top:704.4px" width="21" height="19" viewBox="0 0 21 19"><path d="M1.5 8 C5 1.5 15 1 19.5 6.5" stroke="#4a4a4a" stroke-width="2.2" fill="none"/><path d="M2.5 9.5 C6 3.5 14.5 3.5 18.5 8.5 C15.5 14.5 6.5 15.5 2.5 9.5 Z" fill="#050505"/><path d="M4 14 C8 18 15 17 18.5 11.5" stroke="#5a5a5a" stroke-width="1.6" fill="none"/><circle cx="8.5" cy="8.5" r="1.7" fill="#fff"/></svg>
<div style="left:382.0px;top:706.9px;width:14.0px;height:14.0px;background:#fafafa;border:1px solid #9aa0a8;box-sizing:border-box;border-radius:2px"></div>
<div style="left:385.0px;top:713.1px;width:8.0px;height:2.0px;background:#3a4ab0;"></div>
<div style="left:397.0px;top:713.9px;width:7.0px;height:1.0px;background:repeating-linear-gradient(90deg,#8a8a8a 0 2px,transparent 2px 4px);"></div>
<div class="t" style="left:405.0px;top:704.6px;font-size:19px;color:#111;font-weight:bold;font-style:italic;">Slabs</div>
<div style="left:349.0px;top:734.8px;width:922.0px;height:43.2px;background:#f2f2f2;"></div>
<div style="left:948.0px;top:734.8px;width:2.0px;height:43.2px;background:#ffffff;"></div>
<div style="left:314.0px;top:734.8px;width:33.0px;height:43.2px;background:#f0f0f0;border-top:1px solid #fff;border-left:1px solid #fafafa;box-sizing:border-box"></div>
<div style="left:314.0px;top:776.0px;width:35.0px;height:2.0px;background:#6e6e6e;"></div>
<svg style="left:323px;top:747.65px" width="21" height="19" viewBox="0 0 21 19"><path d="M1.5 8 C5 1.5 15 1 19.5 6.5" stroke="#4a4a4a" stroke-width="2.2" fill="none"/><path d="M2.5 9.5 C6 3.5 14.5 3.5 18.5 8.5 C15.5 14.5 6.5 15.5 2.5 9.5 Z" fill="#050505"/><path d="M4 14 C8 18 15 17 18.5 11.5" stroke="#5a5a5a" stroke-width="1.6" fill="none"/><circle cx="8.5" cy="8.5" r="1.7" fill="#fff"/></svg>
<div style="left:416.0px;top:757.1px;width:14.0px;height:1.0px;background:repeating-linear-gradient(90deg,#8a8a8a 0 2px,transparent 2px 4px);"></div>
<svg style="left:433px;top:746.75px" width="26" height="20" viewBox="0 0 26 20"><path d="M1 13 L12 6 L16 1 L21 4 L18 8 L25 11 L14 18 Z" fill="#e2e2e2" stroke="#bdbdbd" stroke-width="1.2"/><path d="M1 13 L14 18 L14 20 L1 15 Z" fill="#bdbdbd"/></svg>
<div class="t" style="left:465.0px;top:748.2px;font-size:18px;color:#141414;font-weight:normal;font-style:normal;">Floor:Generic 300mm:139467</div>
<div style="left:951px;top:734.75px;width:320px;height:43.25px;overflow:hidden"><div class="t" style="left:2.0px;top:13.5px;font-size:18px;color:#141414;font-weight:normal;font-style:normal;">Concrete - Cast-in-Place Concrete - 28 M</div></div>
<div style="left:349.0px;top:778.0px;width:922.0px;height:43.2px;background:#fcfcfc;"></div>
<div style="left:948.0px;top:778.0px;width:2.0px;height:43.2px;background:#ffffff;"></div>
<div style="left:314.0px;top:778.0px;width:33.0px;height:43.2px;background:#f0f0f0;border-top:1px solid #fff;border-left:1px solid #fafafa;box-sizing:border-box"></div>
<div style="left:314.0px;top:819.2px;width:35.0px;height:2.0px;background:#6e6e6e;"></div>
<svg style="left:323px;top:790.9px" width="21" height="19" viewBox="0 0 21 19"><path d="M1.5 8 C5 1.5 15 1 19.5 6.5" stroke="#4a4a4a" stroke-width="2.2" fill="none"/><path d="M2.5 9.5 C6 3.5 14.5 3.5 18.5 8.5 C15.5 14.5 6.5 15.5 2.5 9.5 Z" fill="#050505"/><path d="M4 14 C8 18 15 17 18.5 11.5" stroke="#5a5a5a" stroke-width="1.6" fill="none"/><circle cx="8.5" cy="8.5" r="1.7" fill="#fff"/></svg>
<div style="left:416.0px;top:800.4px;width:14.0px;height:1.0px;background:repeating-linear-gradient(90deg,#8a8a8a 0 2px,transparent 2px 4px);"></div>
<svg style="left:433px;top:790.0px" width="26" height="20" viewBox="0 0 26 20"><path d="M1 13 L12 6 L16 1 L21 4 L18 8 L25 11 L14 18 Z" fill="#e2e2e2" stroke="#bdbdbd" stroke-width="1.2"/><path d="M1 13 L14 18 L14 20 L1 15 Z" fill="#bdbdbd"/></svg>
<div class="t" style="left:465.0px;top:791.5px;font-size:18px;color:#141414;font-weight:normal;font-style:normal;">Floor:Generic Concrete 300mm:133345</div>
<div style="left:951px;top:778.0px;width:320px;height:43.25px;overflow:hidden"><div class="t" style="left:2.0px;top:13.5px;font-size:18px;color:#141414;font-weight:normal;font-style:normal;">Concrete - Cast-in-Place Concrete - 28 M</div></div>
<div style="left:349.0px;top:821.2px;width:922.0px;height:43.2px;background:#f2f2f2;"></div>
<div style="left:948.0px;top:821.2px;width:2.0px;height:43.2px;background:#ffffff;"></div>
<div style="left:314.0px;top:821.2px;width:33.0px;height:43.2px;background:#f0f0f0;border-top:1px solid #fff;border-left:1px solid #fafafa;box-sizing:border-box"></div>
<div style="left:314.0px;top:862.5px;width:35.0px;height:2.0px;background:#6e6e6e;"></div>
<svg style="left:323px;top:834.15px" width="21" height="19" viewBox="0 0 21 19"><path d="M1.5 8 C5 1.5 15 1 19.5 6.5" stroke="#4a4a4a" stroke-width="2.2" fill="none"/><path d="M2.5 9.5 C6 3.5 14.5 3.5 18.5 8.5 C15.5 14.5 6.5 15.5 2.5 9.5 Z" fill="#050505"/><path d="M4 14 C8 18 15 17 18.5 11.5" stroke="#5a5a5a" stroke-width="1.6" fill="none"/><circle cx="8.5" cy="8.5" r="1.7" fill="#fff"/></svg>
<div style="left:416.0px;top:843.6px;width:14.0px;height:1.0px;background:repeating-linear-gradient(90deg,#8a8a8a 0 2px,transparent 2px 4px);"></div>
<svg style="left:433px;top:833.25px" width="26" height="20" viewBox="0 0 26 20"><path d="M1 13 L12 6 L16 1 L21 4 L18 8 L25 11 L14 18 Z" fill="#e2e2e2" stroke="#bdbdbd" stroke-width="1.2"/><path d="M1 13 L14 18 L14 20 L1 15 Z" fill="#bdbdbd"/></svg>
<div class="t" style="left:465.0px;top:834.7px;font-size:18px;color:#141414;font-weight:normal;font-style:normal;">Floor:Generic Concrete 300mm:151849</div>
<div style="left:951px;top:821.25px;width:320px;height:43.25px;overflow:hidden"><div class="t" style="left:2.0px;top:13.5px;font-size:18px;color:#141414;font-weight:normal;font-style:normal;">Concrete - Cast-in-Place Concrete - 28 M</div></div>
<div style="left:349.0px;top:864.5px;width:922.0px;height:43.2px;background:#fcfcfc;"></div>
<div style="left:948.0px;top:864.5px;width:2.0px;height:43.2px;background:#ffffff;"></div>
<div style="left:314.0px;top:864.5px;width:33.0px;height:43.2px;background:#f0f0f0;border-top:1px solid #fff;border-left:1px solid #fafafa;box-sizing:border-box"></div>
<div style="left:314.0px;top:905.8px;width:35.0px;height:2.0px;background:#6e6e6e;"></div>
<svg style="left:323px;top:877.4px" width="21" height="19" viewBox="0 0 21 19"><path d="M1.5 8 C5 1.5 15 1 19.5 6.5" stroke="#4a4a4a" stroke-width="2.2" fill="none"/><path d="M2.5 9.5 C6 3.5 14.5 3.5 18.5 8.5 C15.5 14.5 6.5 15.5 2.5 9.5 Z" fill="#050505"/><path d="M4 14 C8 18 15 17 18.5 11.5" stroke="#5a5a5a" stroke-width="1.6" fill="none"/><circle cx="8.5" cy="8.5" r="1.7" fill="#fff"/></svg>
<div style="left:416.0px;top:886.9px;width:14.0px;height:1.0px;background:repeating-linear-gradient(90deg,#8a8a8a 0 2px,transparent 2px 4px);"></div>
<svg style="left:433px;top:876.5px" width="26" height="20" viewBox="0 0 26 20"><path d="M1 13 L12 6 L16 1 L21 4 L18 8 L25 11 L14 18 Z" fill="#e2e2e2" stroke="#bdbdbd" stroke-width="1.2"/><path d="M1 13 L14 18 L14 20 L1 15 Z" fill="#bdbdbd"/></svg>
<div class="t" style="left:465.0px;top:878.0px;font-size:18px;color:#141414;font-weight:normal;font-style:normal;">Floor:160mm Concrete With 50mm Metal Deck:134840</div>
<div style="left:951px;top:864.5px;width:320px;height:43.25px;overflow:hidden"><div class="t" style="left:2.0px;top:13.5px;font-size:18px;color:#141414;font-weight:normal;font-style:normal;">Concrete - Cast-in-Place Concrete - 35 M</div></div>
<div style="left:349.0px;top:907.8px;width:922.0px;height:42.2px;background:#0a66c2;"></div>
<div style="left:948.0px;top:907.8px;width:2.0px;height:42.2px;background:#ffffff;opacity:0.6"></div>
<div style="left:314.0px;top:907.8px;width:33.0px;height:43.2px;background:#f0f0f0;border-top:1px solid #fff;border-left:1px solid #fafafa;box-sizing:border-box"></div>
<div style="left:314.0px;top:949.0px;width:35.0px;height:2.0px;background:#6e6e6e;"></div>
<svg style="left:323px;top:920.65px" width="21" height="19" viewBox="0 0 21 19"><path d="M1.5 8 C5 1.5 15 1 19.5 6.5" stroke="#4a4a4a" stroke-width="2.2" fill="none"/><path d="M2.5 9.5 C6 3.5 14.5 3.5 18.5 8.5 C15.5 14.5 6.5 15.5 2.5 9.5 Z" fill="#050505"/><path d="M4 14 C8 18 15 17 18.5 11.5" stroke="#5a5a5a" stroke-width="1.6" fill="none"/><circle cx="8.5" cy="8.5" r="1.7" fill="#fff"/></svg>
<div style="left:416.0px;top:930.1px;width:14.0px;height:1.0px;background:repeating-linear-gradient(90deg,#8a8a8a 0 2px,transparent 2px 4px);"></div>
<svg style="left:433px;top:919.75px" width="26" height="20" viewBox="0 0 26 20"><path d="M1 13 L12 6 L16 1 L21 4 L18 8 L25 11 L14 18 Z" fill="#ffffff" stroke="#d8d8d8" stroke-width="1.2"/><path d="M1 13 L14 18 L14 20 L1 15 Z" fill="#d8d8d8"/></svg>
<div class="t" style="left:465.0px;top:921.2px;font-size:18px;color:#ffffff;font-weight:normal;font-style:normal;">Floor:Concrete Deck - Tapered Insulation:152157</div>
<div style="left:951px;top:907.75px;width:320px;height:43.25px;overflow:hidden"><div class="t" style="left:2.0px;top:13.5px;font-size:18px;color:#ffffff;font-weight:normal;font-style:normal;">Insulation / Thermal Barriers - Rigid insul</div></div>
<div style="left:389.0px;top:248.0px;width:1.0px;height:700.0px;background:repeating-linear-gradient(180deg,#8a8a8a 0 2px,transparent 2px 4px);"></div>
<div style="left:416.0px;top:248.0px;width:1.0px;height:336.1px;background:repeating-linear-gradient(180deg,#8a8a8a 0 2px,transparent 2px 4px);"></div>
<div style="left:416.0px;top:734.8px;width:1.0px;height:195.4px;background:repeating-linear-gradient(180deg,#8a8a8a 0 2px,transparent 2px 4px);"></div>
<div style="left:1271.0px;top:242.0px;width:28.0px;height:710.0px;background:linear-gradient(90deg,#e8e8e8,#f4f4f4 50%,#ececec);"></div>
<svg style="left:1280px;top:258px" width="9" height="9" viewBox="0 0 9 9"><polygon points="0,9 9,9 4.5,0" fill="#555"/></svg>
<svg style="left:1280px;top:934px" width="9" height="9" viewBox="0 0 9 9"><polygon points="0,0 9,0 4.5,9" fill="#555"/></svg>
<div style="left:1274.0px;top:895.0px;width:24.0px;height:14.0px;background:linear-gradient(180deg,#f4f4f4,#d8d8d8);border:1px solid #9a9a9a;border-radius:3px;box-sizing:border-box"></div>
<div style="left:314.0px;top:952.0px;width:35.0px;height:30.0px;background:#f0f0f0;"></div>
<div style="left:349.0px;top:952.0px;width:922.0px;height:30.0px;background:linear-gradient(180deg,#ececec,#f6f6f6 50%,#eaeaea);"></div>
<div style="left:1271.0px;top:952.0px;width:28.0px;height:30.0px;background:#f0f0f0;"></div>
<svg style="left:360px;top:962px" width="9" height="9" viewBox="0 0 9 9"><polygon points="9,0 9,9 0,4.5" fill="#444"/></svg>
<svg style="left:1252px;top:962px" width="9" height="9" viewBox="0 0 9 9"><polygon points="0,0 0,9 9,4.5" fill="#444"/></svg>
<div style="left:381.0px;top:955.0px;width:249.0px;height:25.0px;background:linear-gradient(180deg,#f6f6f6 0,#e6e6e6 50%,#d2d2d2 100%);border:1px solid #9a9a9a;border-radius:4px;box-sizing:border-box"></div>
<div style="left:499.0px;top:962.0px;width:1.5px;height:10.0px;background:#555;"></div>
<div style="left:503.0px;top:962.0px;width:1.5px;height:10.0px;background:#555;"></div>
<div style="left:507.0px;top:962.0px;width:1.5px;height:10.0px;background:#555;"></div>
<svg style="left:1301px;top:205px" width="10" height="10" viewBox="0 0 10 10"><polygon points="10,0 10,10 0,5.0" fill="#000"/></svg>
<svg style="left:1301px;top:226px" width="10" height="10" viewBox="0 0 10 10"><polygon points="0,0 0,10 10,5.0" fill="#000"/></svg>
<svg style="left:319px;top:984px" width="11" height="11" viewBox="0 0 11 11"><polygon points="0,11 11,11 5.5,0" fill="#000"/></svg>
<svg style="left:339px;top:984px" width="11" height="11" viewBox="0 0 11 11"><polygon points="0,0 11,0 5.5,11" fill="#000"/></svg>
<div style="left:1309.0px;top:199.0px;width:2.0px;height:780.0px;background:#8e8e8e;"></div>
<div style="left:1309.0px;top:977.0px;width:944.0px;height:2.0px;background:#9a9a9a;"></div>
<div style="left:1311.0px;top:199.0px;width:942.0px;height:44.0px;background:#ffffff;"></div>
<div style="left:1311.0px;top:203.0px;width:198.0px;height:36.0px;background:#f3f5f8;"></div>
<svg style="left:1316px;top:207px" width="24" height="28" viewBox="0 0 24 28"><defs><linearGradient id="bg1316207" x1="0" y1="0" x2="1" y2="0"><stop offset="0" stop-color="#2f5fa8"/><stop offset="0.6" stop-color="#5b8fd0"/><stop offset="1" stop-color="#b9d4ee"/></linearGradient></defs><path d="M5 4 L13 1 L20 5 L21 19 L6 19 Z" fill="url(#bg1316207)"/><path d="M13 1 L14 10 L20 12 L20 5 Z" fill="#a9c8ea"/><text x="1" y="27" font-family="Liberation Sans" font-weight="bold" font-size="9.5" fill="#111">BIM</text></svg>
<div class="t" style="left:1354.0px;top:215.5px;font-size:19.5px;color:#1f2370;font-weight:bold;font-style:normal;">3D</div>
<div style="left:1311.0px;top:242.0px;width:942.0px;height:2.0px;background:#a0a0a0;"></div>
<svg style="left:2008px;top:210px" width="24" height="24" viewBox="0 0 24 24"><ellipse cx="12" cy="11" rx="10" ry="8" fill="#d8e6f0" stroke="#9ab" stroke-width="1"/><ellipse cx="12" cy="13" rx="8" ry="4" fill="#7a9ab0"/><polygon points="13,17 19,22 17,15" fill="#6a8aa0"/></svg>
<svg style="left:2045px;top:210px" width="24" height="24" viewBox="0 0 24 24"><polygon points="2,14 11,1 23,6 14,23" fill="#3a9ae0"/><polygon points="11,1 23,6 20,10 9,5" fill="#8ccaf4"/></svg>
<div style="left:2076.0px;top:203.0px;width:36.0px;height:39.0px;background:#bcdcf6;border:2px solid #3a9ae8;box-sizing:border-box"></div>
<svg style="left:2079px;top:206px" width="30" height="33" viewBox="0 0 30 33"><g stroke="#8aa8d8" stroke-width="1.5"><line x1="9" y1="2" x2="9" y2="31"/><line x1="20" y1="2" x2="20" y2="31"/><line x1="2" y1="10" x2="28" y2="10"/><line x1="2" y1="22" x2="28" y2="22"/></g></svg>
<svg style="left:2119px;top:210px" width="24" height="24" viewBox="0 0 24 24"><polygon points="3,6 12,2 21,6 12,10" fill="#e0e0e0"/><polygon points="3,6 12,10 12,23 3,18" fill="#b8b8b8"/><polygon points="12,10 21,6 21,18 12,23" fill="#999"/></svg>
<svg style="left:2153px;top:219px" width="10" height="6" viewBox="0 0 10 6"><polygon points="0,0 10,0 5,6" fill="#000"/></svg>
<div style="left:2173.0px;top:206.0px;width:2.0px;height:34.0px;background:linear-gradient(90deg,#9a9a9a,#d5d5d5);"></div>
<svg style="left:2186px;top:210px" width="24" height="24" viewBox="0 0 24 24"><rect x="8" y="0" width="7" height="5" fill="#444"/><rect x="2" y="6" width="19" height="13" rx="4" fill="#555"/><circle cx="11.5" cy="13" r="4.5" fill="#ddd"/><circle cx="11.5" cy="13" r="2.5" fill="#333"/><rect x="8" y="19" width="7" height="4" fill="#7ab8e8"/></svg>
<svg style="left:2220px;top:219px" width="10" height="6" viewBox="0 0 10 6"><polygon points="0,0 10,0 5,6" fill="#000"/></svg>
<svg style="left:2244px;top:210px" width="24" height="24" viewBox="0 0 24 24"><circle cx="14" cy="7" r="6" fill="#111"/><path d="M2 24 Q4 14 14 14 Q22 14 24 24 Z" fill="#111"/></svg>
<div style="left:322.0px;top:994.0px;width:1931.0px;height:2.0px;background:#9e9e9e;"></div>
<div style="left:322.0px;top:994.0px;width:2.0px;height:252.0px;background:#8a8a8a;"></div>
<svg style="left:311px;top:999px" width="10" height="10" viewBox="0 0 10 10"><polygon points="10,0 10,10 0,5.0" fill="#000"/></svg>
<svg style="left:311px;top:1021px" width="10" height="10" viewBox="0 0 10 10"><polygon points="0,0 0,10 10,5.0" fill="#000"/></svg>
<div style="left:324.0px;top:996.0px;width:396.0px;height:43.0px;background:#f3f5f8;"></div>
<svg style="left:331px;top:1005px" width="24" height="24" viewBox="0 0 24 24"><rect x="4" y="2" width="16" height="22" fill="#e8e8e8" stroke="#aaa"/><rect x="4" y="2" width="16" height="3" fill="#8fd0f0"/><rect x="7" y="9" width="10" height="2" fill="#888"/><rect x="7" y="13" width="10" height="6" fill="#999"/></svg>
<div class="t" style="left:365.0px;top:1009.7px;font-size:19.2px;color:#1f2370;font-weight:bold;font-style:normal;">BOQ Item Assignments</div>
<div style="left:324.0px;top:1038.0px;width:1929.0px;height:2.0px;background:#a8a8a8;"></div>
<svg style="left:1998px;top:1005px" width="24" height="24" viewBox="0 0 24 24"><rect x="2" y="3" width="20" height="17" rx="5" fill="#333"/><circle cx="3" cy="3" r="3" fill="#6cc7f0"/><circle cx="21" cy="3" r="3" fill="#6cc7f0"/><circle cx="3" cy="20" r="3" fill="#6cc7f0"/><circle cx="21" cy="20" r="3" fill="#6cc7f0"/><circle cx="9" cy="12" r="2.5" fill="#d08050"/><circle cx="15" cy="12" r="2.5" fill="#d08050"/></svg>
<div style="left:2033.0px;top:1000.0px;width:2.0px;height:34.0px;background:linear-gradient(90deg,#9a9a9a,#d5d5d5);"></div>
<svg style="left:2044px;top:1005px" width="24" height="24" viewBox="0 0 24 24"><rect x="2" y="4" width="20" height="16" fill="#2a3a5a"/><rect x="4" y="6" width="16" height="12" fill="#4a6a9a"/><path d="M5 15 L9 10 L13 13 L19 7" stroke="#e03040" stroke-width="2" fill="none"/></svg>
<svg style="left:2082px;top:1005px" width="24" height="24" viewBox="0 0 24 24"><polygon points="12,2 22,8 12,13 2,8" fill="#6ab0e8"/><polygon points="2,12 12,17 22,12 22,14 12,19 2,14" fill="#8aaac8"/><polygon points="2,17 12,22 22,17 22,19 12,24 2,19" fill="#aac0d8"/></svg>
<svg style="left:2119px;top:1005px" width="24" height="24" viewBox="0 0 24 24"><polygon points="4,2 16,2 20,6 20,23 4,23" fill="#d8d8d8" stroke="#999"/><rect x="7" y="9" width="10" height="2" fill="#6a9ad0"/><rect x="7" y="14" width="10" height="2" fill="#6a9ad0"/><polygon points="14,10 22,14 14,18" fill="#5a8ac0"/></svg>
<svg style="left:2156px;top:1005px" width="24" height="24" viewBox="0 0 24 24"><polygon points="4,2 16,2 20,6 20,23 4,23" fill="#d0d0d0" stroke="#999"/><rect x="9" y="12" width="10" height="10" fill="#6a9ad0"/><rect x="7" y="6" width="9" height="2" fill="#888"/></svg>
<div style="left:2190.0px;top:1000.0px;width:2.0px;height:34.0px;background:linear-gradient(90deg,#9a9a9a,#d5d5d5);"></div>
<svg style="left:2200px;top:1005px" width="24" height="24" viewBox="0 0 24 24"><rect x="9" y="1" width="5" height="12" fill="#8aa0e0"/><polygon points="5,11 18,11 11.5,20" fill="#4a6ae8"/><rect x="7" y="21" width="9" height="2" fill="#888"/><rect x="16" y="15" width="6" height="7" fill="#7aa8e8"/></svg>
<svg style="left:2238px;top:1005px" width="24" height="24" viewBox="0 0 24 24"><rect x="9" y="11" width="5" height="12" fill="#8aa0e0"/><polygon points="5,12 18,12 11.5,3" fill="#4a6ae8"/><rect x="4" y="1" width="14" height="2" fill="#7080d0"/><rect x="15" y="0" width="6" height="6" fill="#7aa8e8"/><rect x="17" y="10" width="5" height="5" fill="#7aa8e8"/></svg>
<div class="t" style="left:328.0px;top:1059.6px;font-size:18.2px;color:#3b4fd6;font-weight:normal;font-style:normal;transform:scaleY(1.1);transform-origin:0 15.41px;">Title:</div>
<div style="left:414.0px;top:1050.0px;width:1343.0px;height:36.0px;background:#ffffff;border:1px solid #a9a9a9;border-top-color:#8f8f8f;box-sizing:border-box"></div>
<div class="t" style="left:418.5px;top:1059.5px;font-size:18.3px;color:#1b1b1b;font-weight:normal;font-style:normal;transform:scaleY(1.1);transform-origin:0 15.49px;">Columns [189], Footings [96], Slabs [1], Walls [6]</div>
<div class="t" style="left:1913.5px;top:1059.5px;font-size:18.3px;color:#3b4fd6;font-weight:normal;font-style:normal;transform:scaleY(1.08);transform-origin:0 15.49px;">423.48</div>
<div style="left:2129.0px;top:1051.0px;width:99.0px;height:33.0px;background:linear-gradient(180deg,#f4f4f4,#dedede);border-left:1px dotted #777"></div>
<div class="t" style="left:2133.0px;top:1059.5px;font-size:18.3px;color:#1b1b1b;font-weight:normal;font-style:normal;transform:scaleY(1.08);transform-origin:0 15.49px;">M2</div>
<div style="left:2204.0px;top:1051.0px;width:24.0px;height:33.0px;background:#c5ddf2;"></div>
<svg style="left:2211px;top:1064px" width="10" height="10" viewBox="0 0 10 10"><polygon points="0,0 10,0 5.0,10" fill="#000"/></svg>
<svg style="left:2233px;top:1055px" width="24" height="24" viewBox="0 0 24 24"><ellipse cx="12" cy="12" rx="10" ry="7" fill="#c8c040" stroke="#6a7a30" stroke-width="2"/><ellipse cx="8" cy="12" rx="4" ry="5" fill="#e8e070" stroke="#6a7a30" stroke-width="1.5"/></svg>
<div style="left:322.0px;top:1093.0px;width:1931.0px;height:2.0px;background:#8c8c8c;"></div>
<div style="left:324.0px;top:1095.0px;width:2.0px;height:151.0px;background:#8a8a8a;"></div>
<div style="left:326.0px;top:1095.0px;width:1927.0px;height:45.0px;background:linear-gradient(180deg,#ffffff 0,#fafafa 40%,#efefef 100%);"></div>
<div style="left:326.0px;top:1140.0px;width:1927.0px;height:2.0px;background:#e2e2e2;"></div>
<div class="t" style="left:332.5px;top:1113.1px;font-size:18.3px;color:#1b1b1b;font-weight:normal;font-style:normal;transform:scaleY(1.07);transform-origin:0 15.49px;">Title</div>
<svg style="left:374px;top:1113px" width="25" height="18" viewBox="0 0 25 18"><polygon points="2,2 23,2 12.5,16" fill="#e8e8e8" stroke="#555" stroke-width="3" stroke-linejoin="round"/></svg>
<div style="left:1163.0px;top:1097.0px;width:2.0px;height:43.0px;background:#e6e6e6;"></div>
<div class="t" style="left:1172.0px;top:1113.1px;font-size:18.3px;color:#1b1b1b;font-weight:normal;font-style:normal;transform:scaleY(1.07);transform-origin:0 15.49px;">Quantity</div>
<div style="left:1288.0px;top:1097.0px;width:2.0px;height:43.0px;background:#e6e6e6;"></div>
<div class="t" style="left:1297.0px;top:1113.1px;font-size:18.3px;color:#1b1b1b;font-weight:normal;font-style:normal;transform:scaleY(1.07);transform-origin:0 15.49px;">Unit</div>
<div style="left:1411.0px;top:1097.0px;width:2.0px;height:43.0px;background:#e6e6e6;"></div>
<div class="t" style="left:1420.0px;top:1113.1px;font-size:18.3px;color:#1b1b1b;font-weight:normal;font-style:normal;transform:scaleY(1.07);transform-origin:0 15.49px;">Rate</div>
<div style="left:1533.0px;top:1097.0px;width:2.0px;height:43.0px;background:#e6e6e6;"></div>
<div class="t" style="left:1542.0px;top:1113.1px;font-size:18.3px;color:#1b1b1b;font-weight:normal;font-style:normal;transform:scaleY(1.07);transform-origin:0 15.49px;">Total</div>
<div style="left:1657.0px;top:1097.0px;width:2.0px;height:43.0px;background:#e6e6e6;"></div>
<div class="t" style="left:1666.0px;top:1113.1px;font-size:18.3px;color:#1b1b1b;font-weight:normal;font-style:normal;transform:scaleY(1.07);transform-origin:0 15.49px;">Currency</div>
<div style="left:1779.0px;top:1097.0px;width:2.0px;height:43.0px;background:#e6e6e6;"></div>
<div class="t" style="left:1788.0px;top:1113.1px;font-size:18.3px;color:#1b1b1b;font-weight:normal;font-style:normal;transform:scaleY(1.07);transform-origin:0 15.49px;">Reference</div>
<div style="left:1902.0px;top:1097.0px;width:2.0px;height:43.0px;background:#e6e6e6;"></div>
<div class="t" style="left:1911.0px;top:1113.1px;font-size:18.3px;color:#1b1b1b;font-weight:normal;font-style:normal;transform:scaleY(1.07);transform-origin:0 15.49px;">Location</div>
<div style="left:2025.0px;top:1097.0px;width:2.0px;height:43.0px;background:#e6e6e6;"></div>
<div class="t" style="left:2034.0px;top:1113.1px;font-size:18.3px;color:#1b1b1b;font-weight:normal;font-style:normal;transform:scaleY(1.07);transform-origin:0 15.49px;">WBS 1</div>
<div style="left:2149.0px;top:1097.0px;width:2.0px;height:43.0px;background:#e6e6e6;"></div>
<div class="t" style="left:2158.0px;top:1113.1px;font-size:18.3px;color:#1b1b1b;font-weight:normal;font-style:normal;transform:scaleY(1.07);transform-origin:0 15.49px;">WBS 2</div>
<div style="left:326.0px;top:1142.0px;width:1927.0px;height:102.0px;background:#fdfdfd;"></div>
<div style="left:322.0px;top:1243.0px;width:1931.0px;height:3.0px;background:#8e8e8e;"></div>
<div style="left:322.0px;top:1246.0px;width:1931.0px;height:2.0px;background:#d4d4d4;"></div>
<div class="t" style="left:1303.0px;top:1272.0px;font-size:18.35px;color:#1b1b1b;font-weight:normal;font-style:normal;transform:scaleY(1.1);transform-origin:0 15.53px;">Visible: 1524, Selected: 292, Total: 1524</div>
<div style="left:1639.0px;top:1263.0px;width:95.0px;height:36.0px;background:linear-gradient(180deg,#f6f6f6 0,#ececec 50%,#dddddd 51%,#d4d4d4 100%);border:1.5px solid #707070;border-radius:4px;box-sizing:border-box"></div>
<div style="left:1746.0px;top:1263.0px;width:195.0px;height:36.0px;background:linear-gradient(180deg,#f6f6f6 0,#ececec 50%,#dddddd 51%,#d4d4d4 100%);border:1.5px solid #707070;border-radius:4px;box-sizing:border-box"></div>
<div style="left:1953.0px;top:1263.0px;width:330.0px;height:36.0px;background:linear-gradient(180deg,#f6f6f6 0,#ececec 50%,#dddddd 51%,#d4d4d4 100%);border:1.5px solid #707070;border-radius:4px;box-sizing:border-box"></div>
<div class="t" style="left:1663.0px;top:1272.5px;font-size:18.3px;color:#1b1b1b;font-weight:normal;font-style:normal;transform:scaleY(1.1);transform-origin:0 15.49px;">Close</div>
<div class="t" style="left:1770.0px;top:1272.5px;font-size:18.3px;color:#1b1b1b;font-weight:normal;font-style:normal;transform:scaleY(1.1);transform-origin:0 15.49px;">Add to BOQ Table</div>
<div class="t" style="left:1976.0px;top:1272.5px;font-size:18.3px;color:#1b1b1b;font-weight:normal;font-style:normal;transform:scaleY(1.1);transform-origin:0 15.49px;">Add to BOQ Table and Hide Used</div></div>
<div style="left:0;top:0;width:2560px;height:1497px;clip-path:inset(90px 307px 191px 307px)"><svg style="left:1311px;top:244px" width="942" height="733" viewBox="1311 244 942 733"><rect x="1311" y="244" width="942" height="733" fill="#ffffff"/><line x1="1003.7" y1="677.2" x2="1711.6" y2="594.0" stroke="#e8e8e8" stroke-width="1"/><line x1="1007.8" y1="678.2" x2="1715.8" y2="594.2" stroke="#e8e8e8" stroke-width="1"/><line x1="1003.5" y1="680.3" x2="1720.0" y2="594.4" stroke="#e8e8e8" stroke-width="1"/><line x1="1007.7" y1="681.4" x2="1724.2" y2="594.6" stroke="#e8e8e8" stroke-width="1"/><line x1="1003.2" y1="683.6" x2="1728.5" y2="594.8" stroke="#e8e8e8" stroke-width="1"/><line x1="1007.5" y1="684.7" x2="1732.7" y2="595.1" stroke="#e8e8e8" stroke-width="1"/><line x1="1003.0" y1="687.0" x2="1737.0" y2="595.3" stroke="#e8e8e8" stroke-width="1"/><line x1="1007.3" y1="688.2" x2="1741.4" y2="595.5" stroke="#e8e8e8" stroke-width="1"/><line x1="1002.7" y1="690.6" x2="1745.7" y2="595.7" stroke="#e8e8e8" stroke-width="1"/><line x1="1002.4" y1="694.3" x2="1754.5" y2="596.2" stroke="#e8e8e8" stroke-width="1"/><line x1="1007.0" y1="695.6" x2="1759.0" y2="596.4" stroke="#e8e8e8" stroke-width="1"/><line x1="1002.1" y1="698.2" x2="1763.4" y2="596.6" stroke="#e8e8e8" stroke-width="1"/><line x1="1006.8" y1="699.5" x2="1768.0" y2="596.8" stroke="#e8e8e8" stroke-width="1"/><line x1="1001.8" y1="702.2" x2="1772.5" y2="597.1" stroke="#e8e8e8" stroke-width="1"/><line x1="1006.6" y1="703.7" x2="1777.1" y2="597.3" stroke="#e8e8e8" stroke-width="1"/><line x1="1001.4" y1="706.5" x2="1781.7" y2="597.5" stroke="#e8e8e8" stroke-width="1"/><line x1="1006.3" y1="708.0" x2="1786.3" y2="597.8" stroke="#e8e8e8" stroke-width="1"/><line x1="1001.1" y1="711.0" x2="1791.0" y2="598.0" stroke="#e8e8e8" stroke-width="1"/><line x1="1000.7" y1="715.7" x2="1800.4" y2="598.5" stroke="#e8e8e8" stroke-width="1"/><line x1="1005.9" y1="717.4" x2="1805.1" y2="598.7" stroke="#e8e8e8" stroke-width="1"/><line x1="1000.3" y1="720.7" x2="1809.9" y2="598.9" stroke="#e8e8e8" stroke-width="1"/><line x1="1005.6" y1="722.5" x2="1814.8" y2="599.2" stroke="#e8e8e8" stroke-width="1"/><line x1="1011.0" y1="724.2" x2="1819.6" y2="599.4" stroke="#e8e8e8" stroke-width="1"/><line x1="1005.4" y1="727.8" x2="1824.5" y2="599.7" stroke="#e8e8e8" stroke-width="1"/><line x1="1010.9" y1="729.7" x2="1829.4" y2="599.9" stroke="#e8e8e8" stroke-width="1"/><line x1="1005.1" y1="733.4" x2="1834.4" y2="600.2" stroke="#e8e8e8" stroke-width="1"/><line x1="1010.7" y1="735.4" x2="1839.4" y2="600.4" stroke="#e8e8e8" stroke-width="1"/><line x1="1010.6" y1="741.5" x2="1849.5" y2="600.9" stroke="#e8e8e8" stroke-width="1"/><line x1="1004.5" y1="745.7" x2="1854.6" y2="601.2" stroke="#e8e8e8" stroke-width="1"/><line x1="1010.5" y1="748.0" x2="1859.7" y2="601.5" stroke="#e8e8e8" stroke-width="1"/><line x1="1004.1" y1="752.4" x2="1864.9" y2="601.7" stroke="#e8e8e8" stroke-width="1"/><line x1="1010.3" y1="754.8" x2="1870.1" y2="602.0" stroke="#e8e8e8" stroke-width="1"/><line x1="1016.6" y1="757.2" x2="1875.4" y2="602.2" stroke="#e8e8e8" stroke-width="1"/><line x1="1023.1" y1="759.7" x2="1880.7" y2="602.5" stroke="#e8e8e8" stroke-width="1"/><line x1="1029.7" y1="762.3" x2="1886.0" y2="602.8" stroke="#e8e8e8" stroke-width="1"/><line x1="1036.4" y1="764.9" x2="1891.4" y2="603.0" stroke="#e8e8e8" stroke-width="1"/><line x1="1050.4" y1="770.2" x2="1902.3" y2="603.6" stroke="#e8e8e8" stroke-width="1"/><line x1="1057.6" y1="773.0" x2="1907.7" y2="603.9" stroke="#e8e8e8" stroke-width="1"/><line x1="1065.0" y1="775.8" x2="1913.3" y2="604.2" stroke="#e8e8e8" stroke-width="1"/><line x1="1072.5" y1="778.8" x2="1918.9" y2="604.4" stroke="#e8e8e8" stroke-width="1"/><line x1="1080.3" y1="781.7" x2="1924.5" y2="604.7" stroke="#e8e8e8" stroke-width="1"/><line x1="1088.2" y1="784.8" x2="1930.1" y2="605.0" stroke="#e8e8e8" stroke-width="1"/><line x1="1096.3" y1="787.9" x2="1935.8" y2="605.3" stroke="#e8e8e8" stroke-width="1"/><line x1="1104.7" y1="791.1" x2="1941.6" y2="605.6" stroke="#e8e8e8" stroke-width="1"/><line x1="1113.2" y1="794.4" x2="1947.4" y2="605.9" stroke="#e8e8e8" stroke-width="1"/><line x1="1130.9" y1="801.2" x2="1959.1" y2="606.5" stroke="#e8e8e8" stroke-width="1"/><line x1="1140.1" y1="804.8" x2="1965.0" y2="606.8" stroke="#e8e8e8" stroke-width="1"/><line x1="1149.6" y1="808.4" x2="1971.0" y2="607.1" stroke="#e8e8e8" stroke-width="1"/><line x1="1159.3" y1="812.1" x2="1977.0" y2="607.4" stroke="#e8e8e8" stroke-width="1"/><line x1="1169.2" y1="816.0" x2="1983.0" y2="607.7" stroke="#e8e8e8" stroke-width="1"/><line x1="1179.5" y1="819.9" x2="1989.1" y2="608.0" stroke="#e8e8e8" stroke-width="1"/><line x1="1190.0" y1="824.0" x2="1995.3" y2="608.3" stroke="#e8e8e8" stroke-width="1"/><line x1="1200.8" y1="828.1" x2="2001.5" y2="608.6" stroke="#e8e8e8" stroke-width="1"/><line x1="1211.9" y1="832.4" x2="2007.8" y2="608.9" stroke="#e8e8e8" stroke-width="1"/><line x1="1235.2" y1="841.4" x2="2020.4" y2="609.5" stroke="#e8e8e8" stroke-width="1"/><line x1="1247.3" y1="846.0" x2="2026.8" y2="609.9" stroke="#e8e8e8" stroke-width="1"/><line x1="1259.8" y1="850.8" x2="2033.3" y2="610.2" stroke="#e8e8e8" stroke-width="1"/><line x1="1272.7" y1="855.8" x2="2039.8" y2="610.5" stroke="#e8e8e8" stroke-width="1"/><line x1="1286.0" y1="860.9" x2="2046.4" y2="610.9" stroke="#e8e8e8" stroke-width="1"/><line x1="1299.8" y1="866.2" x2="2053.0" y2="611.2" stroke="#e8e8e8" stroke-width="1"/><line x1="1313.9" y1="871.7" x2="2059.6" y2="611.5" stroke="#e8e8e8" stroke-width="1"/><line x1="1328.6" y1="877.3" x2="2066.4" y2="611.9" stroke="#e8e8e8" stroke-width="1"/><line x1="1343.7" y1="883.1" x2="2073.2" y2="612.2" stroke="#e8e8e8" stroke-width="1"/><line x1="1375.5" y1="895.4" x2="2086.9" y2="612.9" stroke="#e8e8e8" stroke-width="1"/><line x1="1392.3" y1="901.8" x2="2093.8" y2="613.2" stroke="#e8e8e8" stroke-width="1"/><line x1="1409.6" y1="908.5" x2="2100.8" y2="613.6" stroke="#e8e8e8" stroke-width="1"/><line x1="1427.6" y1="915.4" x2="2107.9" y2="614.0" stroke="#e8e8e8" stroke-width="1"/><line x1="1446.3" y1="922.6" x2="2115.0" y2="614.3" stroke="#e8e8e8" stroke-width="1"/><line x1="1465.7" y1="930.1" x2="2122.2" y2="614.7" stroke="#e8e8e8" stroke-width="1"/><line x1="1485.8" y1="937.8" x2="2129.5" y2="615.0" stroke="#e8e8e8" stroke-width="1"/><line x1="1506.7" y1="945.8" x2="2136.8" y2="615.4" stroke="#e8e8e8" stroke-width="1"/><line x1="1528.4" y1="954.2" x2="2144.2" y2="615.8" stroke="#e8e8e8" stroke-width="1"/><line x1="1574.6" y1="972.0" x2="2159.1" y2="616.5" stroke="#e8e8e8" stroke-width="1"/><line x1="1599.2" y1="981.5" x2="2166.7" y2="616.9" stroke="#e8e8e8" stroke-width="1"/><line x1="1624.9" y1="991.3" x2="2174.3" y2="617.3" stroke="#e8e8e8" stroke-width="1"/><line x1="1651.7" y1="1001.7" x2="2182.0" y2="617.7" stroke="#e8e8e8" stroke-width="1"/><line x1="1679.7" y1="1012.5" x2="2189.8" y2="618.1" stroke="#e8e8e8" stroke-width="1"/><line x1="1709.1" y1="1023.7" x2="2197.6" y2="618.5" stroke="#e8e8e8" stroke-width="1"/><line x1="1739.8" y1="1035.6" x2="2205.6" y2="618.9" stroke="#e8e8e8" stroke-width="1"/><line x1="1772.1" y1="1048.0" x2="2213.5" y2="619.3" stroke="#e8e8e8" stroke-width="1"/><line x1="1806.0" y1="1061.0" x2="2221.6" y2="619.7" stroke="#e8e8e8" stroke-width="1"/><line x1="1879.1" y1="1089.2" x2="2237.9" y2="620.5" stroke="#e8e8e8" stroke-width="1"/><line x1="1918.6" y1="1104.4" x2="2246.2" y2="620.9" stroke="#e8e8e8" stroke-width="1"/><line x1="1960.4" y1="1120.5" x2="2254.5" y2="621.3" stroke="#e8e8e8" stroke-width="1"/><line x1="2004.5" y1="1137.5" x2="2263.0" y2="621.8" stroke="#e8e8e8" stroke-width="1"/><line x1="2051.3" y1="1155.5" x2="2271.5" y2="622.2" stroke="#e8e8e8" stroke-width="1"/><line x1="2100.9" y1="1174.6" x2="2280.1" y2="622.6" stroke="#e8e8e8" stroke-width="1"/><line x1="2153.7" y1="1194.9" x2="2288.7" y2="623.1" stroke="#e8e8e8" stroke-width="1"/><line x1="2209.8" y1="1216.5" x2="2297.5" y2="623.5" stroke="#e8e8e8" stroke-width="1"/><line x1="2269.8" y1="1239.5" x2="2306.3" y2="623.9" stroke="#e8e8e8" stroke-width="1"/><line x1="1001.2" y1="747.9" x2="2333.5" y2="1252.8" stroke="#e8e8e8" stroke-width="1"/><line x1="1002.1" y1="736.8" x2="2332.4" y2="1214.7" stroke="#e8e8e8" stroke-width="1"/><line x1="1000.2" y1="725.9" x2="2331.4" y2="1180.4" stroke="#e8e8e8" stroke-width="1"/><line x1="1001.8" y1="708.7" x2="2329.7" y2="1121.2" stroke="#e8e8e8" stroke-width="1"/><line x1="1000.2" y1="700.4" x2="2328.9" y2="1095.3" stroke="#e8e8e8" stroke-width="1"/><line x1="1001.0" y1="693.5" x2="2328.3" y2="1071.7" stroke="#e8e8e8" stroke-width="1"/><line x1="1001.6" y1="687.2" x2="2327.6" y2="1049.9" stroke="#e8e8e8" stroke-width="1"/><line x1="1000.2" y1="680.7" x2="2327.0" y2="1029.8" stroke="#e8e8e8" stroke-width="1"/><line x1="1002.9" y1="675.8" x2="2326.5" y2="1011.1" stroke="#e8e8e8" stroke-width="1"/><line x1="1017.4" y1="674.1" x2="2326.0" y2="993.8" stroke="#e8e8e8" stroke-width="1"/><line x1="1031.6" y1="672.5" x2="2325.5" y2="977.7" stroke="#e8e8e8" stroke-width="1"/><line x1="1045.5" y1="670.8" x2="2325.1" y2="962.6" stroke="#e8e8e8" stroke-width="1"/><line x1="1072.3" y1="667.7" x2="2324.3" y2="935.3" stroke="#e8e8e8" stroke-width="1"/><line x1="1085.3" y1="666.2" x2="2323.9" y2="922.9" stroke="#e8e8e8" stroke-width="1"/><line x1="1098.1" y1="664.7" x2="2323.6" y2="911.2" stroke="#e8e8e8" stroke-width="1"/><line x1="1110.6" y1="663.3" x2="2323.3" y2="900.2" stroke="#e8e8e8" stroke-width="1"/><line x1="1122.8" y1="661.8" x2="2323.0" y2="889.7" stroke="#e8e8e8" stroke-width="1"/><line x1="1134.8" y1="660.4" x2="2322.7" y2="879.9" stroke="#e8e8e8" stroke-width="1"/><line x1="1146.5" y1="659.1" x2="2322.4" y2="870.5" stroke="#e8e8e8" stroke-width="1"/><line x1="1158.0" y1="657.7" x2="2322.1" y2="861.7" stroke="#e8e8e8" stroke-width="1"/><line x1="1169.3" y1="656.4" x2="2321.9" y2="853.3" stroke="#e8e8e8" stroke-width="1"/><line x1="1191.3" y1="653.9" x2="2321.4" y2="837.6" stroke="#e8e8e8" stroke-width="1"/><line x1="1201.9" y1="652.6" x2="2321.2" y2="830.3" stroke="#e8e8e8" stroke-width="1"/><line x1="1212.4" y1="651.4" x2="2321.0" y2="823.4" stroke="#e8e8e8" stroke-width="1"/><line x1="1222.6" y1="650.2" x2="2320.8" y2="816.7" stroke="#e8e8e8" stroke-width="1"/><line x1="1232.7" y1="649.0" x2="2320.6" y2="810.4" stroke="#e8e8e8" stroke-width="1"/><line x1="1242.6" y1="647.9" x2="2320.5" y2="804.3" stroke="#e8e8e8" stroke-width="1"/><line x1="1252.3" y1="646.8" x2="2320.3" y2="798.5" stroke="#e8e8e8" stroke-width="1"/><line x1="1261.8" y1="645.7" x2="2320.1" y2="792.9" stroke="#e8e8e8" stroke-width="1"/><line x1="1271.1" y1="644.6" x2="2320.0" y2="787.5" stroke="#e8e8e8" stroke-width="1"/><line x1="1289.4" y1="642.5" x2="2319.7" y2="777.4" stroke="#e8e8e8" stroke-width="1"/><line x1="1298.2" y1="641.4" x2="2319.5" y2="772.6" stroke="#e8e8e8" stroke-width="1"/><line x1="1307.0" y1="640.4" x2="2319.4" y2="768.0" stroke="#e8e8e8" stroke-width="1"/><line x1="1315.5" y1="639.4" x2="2319.3" y2="763.6" stroke="#e8e8e8" stroke-width="1"/><line x1="1324.0" y1="638.4" x2="2319.1" y2="759.3" stroke="#e8e8e8" stroke-width="1"/><line x1="1332.2" y1="637.5" x2="2319.0" y2="755.2" stroke="#e8e8e8" stroke-width="1"/><line x1="1340.4" y1="636.5" x2="2318.9" y2="751.2" stroke="#e8e8e8" stroke-width="1"/><line x1="1348.4" y1="635.6" x2="2318.8" y2="747.3" stroke="#e8e8e8" stroke-width="1"/><line x1="1356.3" y1="634.7" x2="2318.7" y2="743.6" stroke="#e8e8e8" stroke-width="1"/><line x1="1371.7" y1="632.9" x2="2318.5" y2="736.5" stroke="#e8e8e8" stroke-width="1"/><line x1="1379.2" y1="632.0" x2="2318.4" y2="733.1" stroke="#e8e8e8" stroke-width="1"/><line x1="1386.6" y1="631.1" x2="2318.3" y2="729.9" stroke="#e8e8e8" stroke-width="1"/><line x1="1393.9" y1="630.3" x2="2318.2" y2="726.7" stroke="#e8e8e8" stroke-width="1"/><line x1="1401.0" y1="629.5" x2="2318.1" y2="723.6" stroke="#e8e8e8" stroke-width="1"/><line x1="1408.1" y1="628.6" x2="2318.0" y2="720.6" stroke="#e8e8e8" stroke-width="1"/><line x1="1415.0" y1="627.8" x2="2317.9" y2="717.8" stroke="#e8e8e8" stroke-width="1"/><line x1="1421.8" y1="627.0" x2="2317.9" y2="714.9" stroke="#e8e8e8" stroke-width="1"/><line x1="1428.6" y1="626.2" x2="2317.8" y2="712.2" stroke="#e8e8e8" stroke-width="1"/><line x1="1441.7" y1="624.7" x2="2317.6" y2="707.0" stroke="#e8e8e8" stroke-width="1"/><line x1="1448.2" y1="624.0" x2="2317.6" y2="704.5" stroke="#e8e8e8" stroke-width="1"/><line x1="1454.5" y1="623.2" x2="2317.5" y2="702.0" stroke="#e8e8e8" stroke-width="1"/><line x1="1460.8" y1="622.5" x2="2317.4" y2="699.7" stroke="#e8e8e8" stroke-width="1"/><line x1="1466.9" y1="621.8" x2="2317.3" y2="697.3" stroke="#e8e8e8" stroke-width="1"/><line x1="1473.0" y1="621.1" x2="2317.3" y2="695.1" stroke="#e8e8e8" stroke-width="1"/><line x1="1479.0" y1="620.4" x2="2317.2" y2="692.9" stroke="#e8e8e8" stroke-width="1"/><line x1="1484.9" y1="619.7" x2="2317.2" y2="690.7" stroke="#e8e8e8" stroke-width="1"/><line x1="1490.7" y1="619.0" x2="2317.1" y2="688.7" stroke="#e8e8e8" stroke-width="1"/><line x1="1502.1" y1="617.7" x2="2317.0" y2="684.6" stroke="#e8e8e8" stroke-width="1"/><line x1="1507.7" y1="617.0" x2="2316.9" y2="682.7" stroke="#e8e8e8" stroke-width="1"/><line x1="1513.2" y1="616.4" x2="2316.9" y2="680.8" stroke="#e8e8e8" stroke-width="1"/><line x1="1518.6" y1="615.8" x2="2316.8" y2="679.0" stroke="#e8e8e8" stroke-width="1"/><line x1="1523.9" y1="615.1" x2="2316.8" y2="677.1" stroke="#e8e8e8" stroke-width="1"/><line x1="1529.2" y1="614.5" x2="2316.7" y2="675.4" stroke="#e8e8e8" stroke-width="1"/><line x1="1534.4" y1="613.9" x2="2316.7" y2="673.7" stroke="#e8e8e8" stroke-width="1"/><line x1="1539.6" y1="613.3" x2="2316.6" y2="672.0" stroke="#e8e8e8" stroke-width="1"/><line x1="1544.6" y1="612.7" x2="2316.6" y2="670.3" stroke="#e8e8e8" stroke-width="1"/><line x1="1554.6" y1="611.6" x2="2316.5" y2="667.1" stroke="#e8e8e8" stroke-width="1"/><line x1="1559.5" y1="611.0" x2="2316.4" y2="665.6" stroke="#e8e8e8" stroke-width="1"/><line x1="1564.3" y1="610.5" x2="2316.4" y2="664.1" stroke="#e8e8e8" stroke-width="1"/><line x1="1569.1" y1="609.9" x2="2316.3" y2="662.6" stroke="#e8e8e8" stroke-width="1"/><line x1="1573.7" y1="609.4" x2="2316.3" y2="661.2" stroke="#e8e8e8" stroke-width="1"/><line x1="1578.4" y1="608.8" x2="2316.2" y2="659.7" stroke="#e8e8e8" stroke-width="1"/><line x1="1583.0" y1="608.3" x2="2316.2" y2="658.4" stroke="#e8e8e8" stroke-width="1"/><line x1="1587.5" y1="607.8" x2="2316.2" y2="657.0" stroke="#e8e8e8" stroke-width="1"/><line x1="1592.0" y1="607.2" x2="2316.1" y2="655.7" stroke="#e8e8e8" stroke-width="1"/><line x1="1600.7" y1="606.2" x2="2316.1" y2="653.1" stroke="#e8e8e8" stroke-width="1"/><line x1="1605.0" y1="605.7" x2="2316.0" y2="651.8" stroke="#e8e8e8" stroke-width="1"/><line x1="1609.3" y1="605.2" x2="2316.0" y2="650.6" stroke="#e8e8e8" stroke-width="1"/><line x1="1613.5" y1="604.7" x2="2315.9" y2="649.4" stroke="#e8e8e8" stroke-width="1"/><line x1="1617.6" y1="604.2" x2="2315.9" y2="648.2" stroke="#e8e8e8" stroke-width="1"/><line x1="1621.7" y1="603.8" x2="2315.9" y2="647.0" stroke="#e8e8e8" stroke-width="1"/><line x1="1625.8" y1="603.3" x2="2315.8" y2="645.9" stroke="#e8e8e8" stroke-width="1"/><line x1="1629.8" y1="602.8" x2="2315.8" y2="644.8" stroke="#e8e8e8" stroke-width="1"/><line x1="1633.8" y1="602.4" x2="2315.8" y2="643.7" stroke="#e8e8e8" stroke-width="1"/><line x1="1641.6" y1="601.5" x2="2315.7" y2="641.5" stroke="#e8e8e8" stroke-width="1"/><line x1="1645.4" y1="601.0" x2="2315.7" y2="640.5" stroke="#e8e8e8" stroke-width="1"/><line x1="1649.2" y1="600.6" x2="2315.7" y2="639.4" stroke="#e8e8e8" stroke-width="1"/><line x1="1652.9" y1="600.1" x2="2315.6" y2="638.4" stroke="#e8e8e8" stroke-width="1"/><line x1="1656.6" y1="599.7" x2="2315.6" y2="637.4" stroke="#e8e8e8" stroke-width="1"/><line x1="1660.3" y1="599.3" x2="2315.6" y2="636.5" stroke="#e8e8e8" stroke-width="1"/><line x1="1663.9" y1="598.9" x2="2315.5" y2="635.5" stroke="#e8e8e8" stroke-width="1"/><line x1="1667.5" y1="598.4" x2="2315.5" y2="634.6" stroke="#e8e8e8" stroke-width="1"/><line x1="1671.0" y1="598.0" x2="2315.5" y2="633.6" stroke="#e8e8e8" stroke-width="1"/><line x1="1678.0" y1="597.2" x2="2315.4" y2="631.8" stroke="#e8e8e8" stroke-width="1"/><line x1="1681.4" y1="596.8" x2="2315.4" y2="631.0" stroke="#e8e8e8" stroke-width="1"/><line x1="1684.8" y1="596.4" x2="2315.4" y2="630.1" stroke="#e8e8e8" stroke-width="1"/><line x1="1688.1" y1="596.0" x2="2315.4" y2="629.2" stroke="#e8e8e8" stroke-width="1"/><line x1="1691.4" y1="595.7" x2="2315.3" y2="628.4" stroke="#e8e8e8" stroke-width="1"/><line x1="1694.7" y1="595.3" x2="2315.3" y2="627.6" stroke="#e8e8e8" stroke-width="1"/><line x1="1698.0" y1="594.9" x2="2315.3" y2="626.8" stroke="#e8e8e8" stroke-width="1"/><line x1="1701.2" y1="594.5" x2="2315.3" y2="626.0" stroke="#e8e8e8" stroke-width="1"/><line x1="1704.3" y1="594.1" x2="2315.2" y2="625.2" stroke="#e8e8e8" stroke-width="1"/><line x1="1008.0" y1="675.2" x2="1707.5" y2="593.8" stroke="#787878" stroke-width="2.2"/><line x1="1007.1" y1="691.8" x2="1750.1" y2="595.9" stroke="#787878" stroke-width="2.2"/><line x1="1006.1" y1="712.6" x2="1795.6" y2="598.2" stroke="#787878" stroke-width="2.2"/><line x1="1004.8" y1="739.4" x2="1844.4" y2="600.7" stroke="#787878" stroke-width="2.2"/><line x1="1043.3" y1="767.5" x2="1896.8" y2="603.3" stroke="#787878" stroke-width="2.2"/><line x1="1121.9" y1="797.8" x2="1953.2" y2="606.2" stroke="#787878" stroke-width="2.2"/><line x1="1223.4" y1="836.8" x2="2014.1" y2="609.2" stroke="#787878" stroke-width="2.2"/><line x1="1359.4" y1="889.1" x2="2080.0" y2="612.5" stroke="#787878" stroke-width="2.2"/><line x1="1551.1" y1="962.9" x2="2151.6" y2="616.2" stroke="#787878" stroke-width="2.2"/><line x1="1841.6" y1="1074.7" x2="2229.7" y2="620.1" stroke="#787878" stroke-width="2.2"/><line x1="2333.9" y1="1264.2" x2="2315.2" y2="624.4" stroke="#787878" stroke-width="2.2"/><line x1="1001.1" y1="716.9" x2="2330.5" y2="1149.4" stroke="#787878" stroke-width="2.2"/><line x1="1059.0" y1="669.3" x2="2324.7" y2="948.5" stroke="#787878" stroke-width="2.2"/><line x1="1180.4" y1="655.1" x2="2321.7" y2="845.2" stroke="#787878" stroke-width="2.2"/><line x1="1280.3" y1="643.5" x2="2319.8" y2="782.3" stroke="#787878" stroke-width="2.2"/><line x1="1364.0" y1="633.8" x2="2318.6" y2="740.0" stroke="#787878" stroke-width="2.2"/><line x1="1435.2" y1="625.5" x2="2317.7" y2="709.6" stroke="#787878" stroke-width="2.2"/><line x1="1496.4" y1="618.4" x2="2317.0" y2="686.6" stroke="#787878" stroke-width="2.2"/><line x1="1549.7" y1="612.2" x2="2316.5" y2="668.7" stroke="#787878" stroke-width="2.2"/><line x1="1596.4" y1="606.7" x2="2316.1" y2="654.4" stroke="#787878" stroke-width="2.2"/><line x1="1637.7" y1="601.9" x2="2315.7" y2="642.6" stroke="#787878" stroke-width="2.2"/><line x1="1674.5" y1="597.6" x2="2315.5" y2="632.7" stroke="#787878" stroke-width="2.2"/><line x1="1707.5" y1="593.8" x2="2315.2" y2="624.4" stroke="#787878" stroke-width="2.2"/><polygon points="1800,655 2076,648 2076,700 2037,695 1800,690" fill="#e9e9e9" /><rect x="1545.0" y="698.5" width="1" height="52" fill="#8a8a8a" opacity="0.42"/><rect x="1548.2" y="700.0" width="1" height="55" fill="#8a8a8a" opacity="0.28"/><rect x="1551.4" y="695.7" width="1" height="63" fill="#8a8a8a" opacity="0.37"/><rect x="1554.6" y="696.3" width="1" height="70" fill="#8a8a8a" opacity="0.46"/><rect x="1557.8" y="699.2" width="1" height="49" fill="#8a8a8a" opacity="0.54"/><rect x="1561.0" y="694.4" width="1" height="55" fill="#8a8a8a" opacity="0.64"/><rect x="1564.2" y="695.9" width="1" height="60" fill="#8a8a8a" opacity="0.55"/><rect x="1567.4" y="692.5" width="1" height="60" fill="#8a8a8a" opacity="0.52"/><rect x="1570.6" y="693.2" width="1" height="31" fill="#8a8a8a" opacity="0.64"/><rect x="1573.8" y="693.5" width="1" height="59" fill="#8a8a8a" opacity="0.65"/><rect x="1577.0" y="694.2" width="1" height="67" fill="#8a8a8a" opacity="0.43"/><rect x="1580.2" y="694.1" width="1" height="48" fill="#8a8a8a" opacity="0.67"/><rect x="1583.4" y="693.8" width="1" height="34" fill="#8a8a8a" opacity="0.31"/><rect x="1586.6" y="689.1" width="1" height="69" fill="#8a8a8a" opacity="0.45"/><rect x="1589.8" y="690.9" width="1" height="42" fill="#8a8a8a" opacity="0.48"/><rect x="1593.0" y="688.7" width="1" height="44" fill="#8a8a8a" opacity="0.51"/><rect x="1596.2" y="689.2" width="1" height="66" fill="#8a8a8a" opacity="0.56"/><rect x="1599.4" y="690.6" width="1" height="64" fill="#8a8a8a" opacity="0.70"/><rect x="1602.6" y="688.3" width="1" height="37" fill="#8a8a8a" opacity="0.64"/><rect x="1605.8" y="689.4" width="1" height="66" fill="#8a8a8a" opacity="0.51"/><rect x="1609.0" y="687.2" width="1" height="38" fill="#8a8a8a" opacity="0.62"/><rect x="1612.2" y="685.6" width="1" height="41" fill="#8a8a8a" opacity="0.28"/><rect x="1615.4" y="686.6" width="1" height="70" fill="#8a8a8a" opacity="0.29"/><rect x="1618.6" y="685.5" width="1" height="46" fill="#8a8a8a" opacity="0.32"/><rect x="1621.8" y="681.8" width="1" height="61" fill="#8a8a8a" opacity="0.64"/><rect x="1625.0" y="679.6" width="1" height="55" fill="#8a8a8a" opacity="0.27"/><rect x="1628.2" y="682.9" width="1" height="43" fill="#8a8a8a" opacity="0.65"/><rect x="1631.4" y="683.8" width="1" height="50" fill="#8a8a8a" opacity="0.70"/><rect x="1634.6" y="679.1" width="1" height="33" fill="#8a8a8a" opacity="0.52"/><rect x="1637.8" y="676.7" width="1" height="38" fill="#8a8a8a" opacity="0.43"/><rect x="1641.0" y="679.5" width="1" height="36" fill="#8a8a8a" opacity="0.27"/><rect x="1644.2" y="680.7" width="1" height="43" fill="#8a8a8a" opacity="0.68"/><rect x="1647.4" y="680.5" width="1" height="45" fill="#8a8a8a" opacity="0.46"/><rect x="1650.6" y="677.9" width="1" height="56" fill="#8a8a8a" opacity="0.52"/><rect x="1653.8" y="677.8" width="1" height="55" fill="#8a8a8a" opacity="0.67"/><rect x="1657.0" y="677.1" width="1" height="47" fill="#8a8a8a" opacity="0.57"/><rect x="1660.2" y="675.1" width="1" height="42" fill="#8a8a8a" opacity="0.69"/><rect x="1663.4" y="676.4" width="1" height="52" fill="#8a8a8a" opacity="0.26"/><rect x="1666.6" y="675.4" width="1" height="53" fill="#8a8a8a" opacity="0.26"/><rect x="1669.8" y="676.3" width="1" height="55" fill="#8a8a8a" opacity="0.28"/><rect x="1673.0" y="676.0" width="1" height="49" fill="#8a8a8a" opacity="0.56"/><rect x="1676.2" y="673.9" width="1" height="58" fill="#8a8a8a" opacity="0.58"/><rect x="1679.4" y="671.6" width="1" height="32" fill="#8a8a8a" opacity="0.55"/><rect x="1682.6" y="676.9" width="1" height="40" fill="#8a8a8a" opacity="0.46"/><rect x="1685.8" y="674.3" width="1" height="43" fill="#8a8a8a" opacity="0.41"/><rect x="1689.0" y="672.2" width="1" height="45" fill="#8a8a8a" opacity="0.52"/><rect x="1692.2" y="671.8" width="1" height="45" fill="#8a8a8a" opacity="0.60"/><rect x="1695.4" y="669.8" width="1" height="53" fill="#8a8a8a" opacity="0.58"/><rect x="1698.6" y="671.1" width="1" height="39" fill="#8a8a8a" opacity="0.61"/><rect x="1701.8" y="670.3" width="1" height="37" fill="#8a8a8a" opacity="0.45"/><rect x="1705.0" y="672.7" width="1" height="34" fill="#8a8a8a" opacity="0.39"/><rect x="1708.2" y="670.1" width="1" height="63" fill="#8a8a8a" opacity="0.45"/><rect x="1711.4" y="672.9" width="1" height="37" fill="#8a8a8a" opacity="0.40"/><rect x="1714.6" y="671.3" width="1" height="65" fill="#8a8a8a" opacity="0.45"/><rect x="1717.8" y="668.4" width="1" height="35" fill="#8a8a8a" opacity="0.49"/><rect x="1721.0" y="667.8" width="1" height="62" fill="#8a8a8a" opacity="0.63"/><rect x="1724.2" y="667.4" width="1" height="41" fill="#8a8a8a" opacity="0.61"/><rect x="1727.4" y="669.8" width="1" height="62" fill="#8a8a8a" opacity="0.41"/><rect x="1730.6" y="666.3" width="1" height="42" fill="#8a8a8a" opacity="0.61"/><rect x="1733.8" y="666.8" width="1" height="44" fill="#8a8a8a" opacity="0.44"/><rect x="1737.0" y="667.3" width="1" height="46" fill="#8a8a8a" opacity="0.66"/><rect x="1740.2" y="665.4" width="1" height="30" fill="#8a8a8a" opacity="0.67"/><rect x="1743.4" y="669.3" width="1" height="69" fill="#8a8a8a" opacity="0.45"/><rect x="1746.6" y="669.4" width="1" height="67" fill="#8a8a8a" opacity="0.35"/><rect x="1749.8" y="667.8" width="1" height="63" fill="#8a8a8a" opacity="0.55"/><rect x="1753.0" y="666.1" width="1" height="42" fill="#8a8a8a" opacity="0.40"/><rect x="1756.2" y="664.0" width="1" height="33" fill="#8a8a8a" opacity="0.51"/><rect x="1759.4" y="663.9" width="1" height="62" fill="#8a8a8a" opacity="0.27"/><rect x="1762.6" y="667.3" width="1" height="58" fill="#8a8a8a" opacity="0.67"/><rect x="1765.8" y="666.9" width="1" height="66" fill="#8a8a8a" opacity="0.51"/><rect x="1769.0" y="661.2" width="1" height="60" fill="#8a8a8a" opacity="0.33"/><rect x="1772.2" y="662.5" width="1" height="57" fill="#8a8a8a" opacity="0.49"/><rect x="1775.4" y="662.9" width="1" height="68" fill="#8a8a8a" opacity="0.53"/><rect x="1778.6" y="662.1" width="1" height="40" fill="#8a8a8a" opacity="0.64"/><rect x="1781.8" y="662.5" width="1" height="61" fill="#8a8a8a" opacity="0.41"/><rect x="1785.0" y="660.5" width="1" height="51" fill="#8a8a8a" opacity="0.62"/><rect x="1788.2" y="659.9" width="1" height="62" fill="#8a8a8a" opacity="0.66"/><rect x="1791.4" y="663.4" width="1" height="63" fill="#8a8a8a" opacity="0.25"/><rect x="1794.6" y="661.9" width="1" height="65" fill="#8a8a8a" opacity="0.27"/><rect x="1797.8" y="659.4" width="1" height="41" fill="#8a8a8a" opacity="0.49"/><rect x="1800.0" y="660.1" width="1" height="52" fill="#8a8a8a" opacity="0.60"/><rect x="1803.5" y="657.1" width="1" height="37" fill="#8a8a8a" opacity="0.31"/><rect x="1807.0" y="657.5" width="1" height="37" fill="#8a8a8a" opacity="0.69"/><rect x="1810.5" y="661.5" width="1" height="38" fill="#8a8a8a" opacity="0.48"/><rect x="1814.0" y="657.8" width="1" height="46" fill="#8a8a8a" opacity="0.41"/><rect x="1817.5" y="659.4" width="1" height="56" fill="#8a8a8a" opacity="0.41"/><rect x="1821.0" y="656.3" width="1" height="47" fill="#8a8a8a" opacity="0.31"/><rect x="1824.5" y="658.0" width="1" height="60" fill="#8a8a8a" opacity="0.42"/><rect x="1828.0" y="654.8" width="1" height="41" fill="#8a8a8a" opacity="0.42"/><rect x="1831.5" y="657.5" width="1" height="62" fill="#8a8a8a" opacity="0.42"/><rect x="1835.0" y="658.3" width="1" height="57" fill="#8a8a8a" opacity="0.44"/><rect x="1838.5" y="655.3" width="1" height="52" fill="#8a8a8a" opacity="0.57"/><rect x="1842.0" y="655.2" width="1" height="59" fill="#8a8a8a" opacity="0.46"/><rect x="1845.5" y="653.8" width="1" height="54" fill="#8a8a8a" opacity="0.56"/><rect x="1849.0" y="652.3" width="1" height="50" fill="#8a8a8a" opacity="0.44"/><rect x="1852.5" y="656.8" width="1" height="68" fill="#8a8a8a" opacity="0.42"/><rect x="1856.0" y="656.5" width="1" height="63" fill="#8a8a8a" opacity="0.37"/><rect x="1859.5" y="653.5" width="1" height="39" fill="#8a8a8a" opacity="0.62"/><rect x="1863.0" y="654.2" width="1" height="66" fill="#8a8a8a" opacity="0.61"/><rect x="1866.5" y="653.9" width="1" height="61" fill="#8a8a8a" opacity="0.50"/><rect x="1870.0" y="650.1" width="1" height="56" fill="#8a8a8a" opacity="0.25"/><rect x="1873.5" y="649.9" width="1" height="62" fill="#8a8a8a" opacity="0.27"/><rect x="1877.0" y="649.2" width="1" height="38" fill="#8a8a8a" opacity="0.65"/><rect x="1880.5" y="649.3" width="1" height="36" fill="#8a8a8a" opacity="0.63"/><rect x="1884.0" y="648.6" width="1" height="65" fill="#8a8a8a" opacity="0.55"/><rect x="1887.5" y="652.5" width="1" height="68" fill="#8a8a8a" opacity="0.51"/><rect x="1891.0" y="651.8" width="1" height="36" fill="#8a8a8a" opacity="0.60"/><rect x="1894.5" y="649.7" width="1" height="60" fill="#8a8a8a" opacity="0.30"/><rect x="1898.0" y="650.7" width="1" height="68" fill="#8a8a8a" opacity="0.28"/><rect x="1901.5" y="648.0" width="1" height="55" fill="#8a8a8a" opacity="0.62"/><rect x="1905.0" y="647.7" width="1" height="41" fill="#8a8a8a" opacity="0.36"/><rect x="1908.5" y="650.1" width="1" height="61" fill="#8a8a8a" opacity="0.43"/><rect x="1912.0" y="648.8" width="1" height="49" fill="#8a8a8a" opacity="0.41"/><rect x="1915.5" y="649.2" width="1" height="38" fill="#8a8a8a" opacity="0.48"/><rect x="1919.0" y="652.7" width="1" height="49" fill="#8a8a8a" opacity="0.59"/><rect x="1922.5" y="648.0" width="1" height="59" fill="#8a8a8a" opacity="0.59"/><rect x="1926.0" y="651.2" width="1" height="53" fill="#8a8a8a" opacity="0.47"/><rect x="1929.5" y="651.2" width="1" height="66" fill="#8a8a8a" opacity="0.32"/><rect x="1933.0" y="648.1" width="1" height="61" fill="#8a8a8a" opacity="0.66"/><rect x="1936.5" y="650.8" width="1" height="51" fill="#8a8a8a" opacity="0.57"/><rect x="1940.0" y="648.9" width="1" height="44" fill="#8a8a8a" opacity="0.34"/><rect x="1943.5" y="651.5" width="1" height="46" fill="#8a8a8a" opacity="0.35"/><rect x="1947.0" y="652.3" width="1" height="68" fill="#8a8a8a" opacity="0.38"/><rect x="1950.5" y="652.5" width="1" height="49" fill="#8a8a8a" opacity="0.63"/><rect x="1954.0" y="652.0" width="1" height="44" fill="#8a8a8a" opacity="0.35"/><rect x="1957.5" y="648.8" width="1" height="52" fill="#8a8a8a" opacity="0.42"/><rect x="1961.0" y="649.8" width="1" height="48" fill="#8a8a8a" opacity="0.39"/><rect x="1964.5" y="653.6" width="1" height="40" fill="#8a8a8a" opacity="0.70"/><rect x="1968.0" y="652.0" width="1" height="56" fill="#8a8a8a" opacity="0.46"/><rect x="1971.5" y="654.3" width="1" height="64" fill="#8a8a8a" opacity="0.50"/><rect x="1975.0" y="652.3" width="1" height="60" fill="#8a8a8a" opacity="0.64"/><rect x="1978.5" y="652.0" width="1" height="61" fill="#8a8a8a" opacity="0.68"/><rect x="1982.0" y="652.5" width="1" height="43" fill="#8a8a8a" opacity="0.36"/><rect x="1985.5" y="654.2" width="1" height="59" fill="#8a8a8a" opacity="0.68"/><rect x="1989.0" y="655.2" width="1" height="43" fill="#8a8a8a" opacity="0.34"/><rect x="1992.5" y="651.8" width="1" height="42" fill="#8a8a8a" opacity="0.57"/><rect x="1996.0" y="655.5" width="1" height="66" fill="#8a8a8a" opacity="0.36"/><rect x="1999.5" y="655.7" width="1" height="46" fill="#8a8a8a" opacity="0.44"/><rect x="2003.0" y="655.1" width="1" height="38" fill="#8a8a8a" opacity="0.29"/><rect x="2006.5" y="655.8" width="1" height="45" fill="#8a8a8a" opacity="0.41"/><rect x="2010.0" y="654.5" width="1" height="59" fill="#8a8a8a" opacity="0.25"/><rect x="2013.5" y="653.2" width="1" height="50" fill="#8a8a8a" opacity="0.47"/><rect x="2017.0" y="652.6" width="1" height="55" fill="#8a8a8a" opacity="0.68"/><rect x="2020.5" y="653.8" width="1" height="54" fill="#8a8a8a" opacity="0.30"/><rect x="2024.0" y="653.3" width="1" height="58" fill="#8a8a8a" opacity="0.30"/><rect x="2027.5" y="657.1" width="1" height="67" fill="#8a8a8a" opacity="0.29"/><rect x="2031.0" y="657.6" width="1" height="48" fill="#8a8a8a" opacity="0.60"/><rect x="2034.5" y="656.7" width="1" height="45" fill="#8a8a8a" opacity="0.55"/><rect x="2038.0" y="656.2" width="1" height="63" fill="#8a8a8a" opacity="0.37"/><rect x="2041.5" y="657.0" width="1" height="69" fill="#8a8a8a" opacity="0.55"/><rect x="2045.0" y="655.8" width="1" height="39" fill="#8a8a8a" opacity="0.47"/><rect x="2048.5" y="654.9" width="1" height="60" fill="#8a8a8a" opacity="0.56"/><rect x="2052.0" y="656.3" width="1" height="41" fill="#8a8a8a" opacity="0.54"/><rect x="2055.5" y="656.9" width="1" height="41" fill="#8a8a8a" opacity="0.65"/><rect x="2059.0" y="657.2" width="1" height="39" fill="#8a8a8a" opacity="0.67"/><rect x="2062.5" y="654.2" width="1" height="47" fill="#8a8a8a" opacity="0.57"/><rect x="2066.0" y="657.1" width="1" height="54" fill="#8a8a8a" opacity="0.54"/><rect x="2069.5" y="656.5" width="1" height="46" fill="#8a8a8a" opacity="0.33"/><rect x="2085.0" y="712.3" width="1" height="59" fill="#8a8a8a" opacity="0.51"/><rect x="2088.5" y="714.2" width="1" height="60" fill="#8a8a8a" opacity="0.38"/><rect x="2092.0" y="713.1" width="1" height="45" fill="#8a8a8a" opacity="0.56"/><rect x="2095.5" y="712.2" width="1" height="50" fill="#8a8a8a" opacity="0.34"/><rect x="2099.0" y="715.1" width="1" height="44" fill="#8a8a8a" opacity="0.37"/><rect x="2102.5" y="713.6" width="1" height="52" fill="#8a8a8a" opacity="0.52"/><rect x="2106.0" y="713.4" width="1" height="64" fill="#8a8a8a" opacity="0.29"/><rect x="2109.5" y="713.1" width="1" height="34" fill="#8a8a8a" opacity="0.29"/><rect x="2113.0" y="715.1" width="1" height="59" fill="#8a8a8a" opacity="0.31"/><rect x="2116.5" y="712.8" width="1" height="47" fill="#8a8a8a" opacity="0.51"/><rect x="2120.0" y="715.3" width="1" height="60" fill="#8a8a8a" opacity="0.46"/><rect x="2123.5" y="712.6" width="1" height="46" fill="#8a8a8a" opacity="0.32"/><rect x="2127.0" y="714.1" width="1" height="53" fill="#8a8a8a" opacity="0.32"/><rect x="2130.5" y="713.0" width="1" height="61" fill="#8a8a8a" opacity="0.26"/><rect x="2134.0" y="715.2" width="1" height="66" fill="#8a8a8a" opacity="0.58"/><rect x="2137.5" y="713.5" width="1" height="52" fill="#8a8a8a" opacity="0.45"/><rect x="2141.0" y="714.5" width="1" height="69" fill="#8a8a8a" opacity="0.49"/><rect x="2144.5" y="713.2" width="1" height="64" fill="#8a8a8a" opacity="0.42"/><rect x="2148.0" y="714.4" width="1" height="59" fill="#8a8a8a" opacity="0.25"/><rect x="2151.5" y="715.1" width="1" height="56" fill="#8a8a8a" opacity="0.42"/><rect x="2155.0" y="714.1" width="1" height="48" fill="#8a8a8a" opacity="0.32"/><rect x="2158.5" y="714.1" width="1" height="31" fill="#8a8a8a" opacity="0.43"/><rect x="2162.0" y="714.6" width="1" height="48" fill="#8a8a8a" opacity="0.45"/><rect x="2165.5" y="715.8" width="1" height="66" fill="#8a8a8a" opacity="0.30"/><rect x="2169.0" y="715.2" width="1" height="55" fill="#8a8a8a" opacity="0.27"/><rect x="2172.5" y="713.4" width="1" height="39" fill="#8a8a8a" opacity="0.28"/><polygon points="1473,706 1640,670 1900,641 2076,648 2076,654 1900,646 1640,676 1473,713" fill="#ababab" /><polygon points="1473,680 1640,648 1900,616 2076,625 2076,648 1900,641 1640,670 1473,706" fill="#5f5f5f" /><polygon points="1473,651 1640,627 1900,602 2076,606 2076,611 1900,605 1640,632 1473,663" fill="#ababab" /><polygon points="1473,631 1640,610 1900,593 2076,596 2076,606 1900,602 1640,627 1473,651" fill="#575757" /><polygon points="1473,597 1640,583.4 1900,571.5 2076,574 2076,578 1900,575 1640,588 1473,606" fill="#ababab" /><polygon points="1473,585.7 1800,563.5 2076,566 2076,574 1900,571.5 1640,583.4 1473,597" fill="#575757" /><rect x="1488.5" y="546.1" width="4.3" height="41.4" fill="#0a9ce9"/><rect x="1488.5" y="604.1" width="4.3" height="27.7" fill="#0a9ce9"/><rect x="1488.5" y="659.7" width="4.3" height="19.9" fill="#0a9ce9"/><rect x="1548.5" y="545.2" width="4.3" height="38.3" fill="#0a9ce9"/><rect x="1548.5" y="597.6" width="4.3" height="26.6" fill="#0a9ce9"/><rect x="1548.5" y="648.6" width="4.3" height="19.5" fill="#0a9ce9"/><rect x="1597.8" y="544.4" width="4.3" height="35.7" fill="#0a9ce9"/><rect x="1597.8" y="639.4" width="4.3" height="19.2" fill="#0a9ce9"/><rect x="1605.8" y="544.3" width="4.3" height="35.3" fill="#0a9ce9"/><rect x="1605.8" y="591.5" width="4.3" height="25.6" fill="#0a9ce9"/><rect x="1641.4" y="543.7" width="4.3" height="33.4" fill="#0a9ce9"/><rect x="1641.4" y="587.8" width="4.3" height="24.9" fill="#0a9ce9"/><rect x="1641.4" y="631.6" width="4.3" height="18.9" fill="#0a9ce9"/><rect x="1654.2" y="543.5" width="4.3" height="32.7" fill="#0a9ce9"/><rect x="1654.2" y="630.3" width="4.3" height="18.7" fill="#0a9ce9"/><rect x="1680.8" y="543.1" width="4.3" height="31.4" fill="#0a9ce9"/><rect x="1680.8" y="585.9" width="4.3" height="24.3" fill="#0a9ce9"/><rect x="1680.8" y="627.5" width="4.3" height="18.2" fill="#0a9ce9"/><rect x="1696.4" y="542.8" width="4.3" height="30.5" fill="#0a9ce9"/><rect x="1696.4" y="585.1" width="4.3" height="24.1" fill="#0a9ce9"/><rect x="1714.8" y="542.6" width="4.3" height="29.6" fill="#0a9ce9"/><rect x="1714.8" y="624.0" width="4.3" height="17.5" fill="#0a9ce9"/><rect x="1732.8" y="542.3" width="4.3" height="28.6" fill="#0a9ce9"/><rect x="1732.8" y="583.2" width="4.3" height="23.5" fill="#0a9ce9"/><rect x="1732.8" y="622.1" width="4.3" height="17.2" fill="#0a9ce9"/><rect x="1744.2" y="542.1" width="4.3" height="28.1" fill="#0a9ce9"/><rect x="1744.2" y="582.7" width="4.3" height="23.4" fill="#0a9ce9"/><rect x="1744.2" y="621.0" width="4.3" height="17.0" fill="#0a9ce9"/><rect x="1765.8" y="541.7" width="4.3" height="26.9" fill="#0a9ce9"/><rect x="1770.8" y="541.7" width="4.3" height="26.7" fill="#0a9ce9"/><rect x="1770.8" y="581.4" width="4.3" height="23.0" fill="#0a9ce9"/><rect x="1770.8" y="618.2" width="4.3" height="16.4" fill="#0a9ce9"/><rect x="1780.8" y="541.5" width="4.3" height="26.1" fill="#0a9ce9"/><rect x="1780.8" y="580.9" width="4.3" height="22.8" fill="#0a9ce9"/><rect x="1780.8" y="617.2" width="4.3" height="16.3" fill="#0a9ce9"/><rect x="1794.6" y="541.4" width="4.3" height="25.3" fill="#0a9ce9"/><rect x="1794.6" y="615.7" width="4.3" height="16.0" fill="#0a9ce9"/><rect x="1807.2" y="541.3" width="3.6" height="25.2" fill="#0a9ce9"/><rect x="1807.2" y="579.5" width="3.6" height="22.4" fill="#0a9ce9"/><rect x="1818.2" y="541.3" width="3.6" height="25.4" fill="#0a9ce9"/><rect x="1818.2" y="579.0" width="3.6" height="22.2" fill="#0a9ce9"/><rect x="1818.2" y="613.3" width="3.6" height="15.5" fill="#0a9ce9"/><rect x="1829.7" y="541.3" width="3.6" height="25.5" fill="#0a9ce9"/><rect x="1829.7" y="612.1" width="3.6" height="15.3" fill="#0a9ce9"/><rect x="1842.0" y="541.2" width="3.6" height="25.7" fill="#0a9ce9"/><rect x="1842.0" y="577.8" width="3.6" height="21.9" fill="#0a9ce9"/><rect x="1842.0" y="610.8" width="3.6" height="15.1" fill="#0a9ce9"/><rect x="1852.1" y="541.2" width="3.6" height="25.8" fill="#0a9ce9"/><rect x="1852.1" y="577.3" width="3.6" height="21.7" fill="#0a9ce9"/><rect x="1865.5" y="541.2" width="3.6" height="26.0" fill="#0a9ce9"/><rect x="1865.5" y="608.4" width="3.6" height="14.6" fill="#0a9ce9"/><rect x="1886.8" y="541.1" width="3.6" height="26.2" fill="#0a9ce9"/><rect x="1886.8" y="575.6" width="3.6" height="21.2" fill="#0a9ce9"/><rect x="1886.8" y="606.2" width="3.6" height="14.2" fill="#0a9ce9"/><rect x="1895.7" y="541.1" width="3.6" height="26.3" fill="#0a9ce9"/><rect x="1895.7" y="575.1" width="3.6" height="21.0" fill="#0a9ce9"/><rect x="1895.7" y="605.3" width="3.6" height="14.0" fill="#0a9ce9"/><rect x="1915.9" y="541.0" width="3.6" height="26.6" fill="#0a9ce9"/><rect x="1925.9" y="541.0" width="3.6" height="26.7" fill="#0a9ce9"/><rect x="1925.9" y="575.5" width="3.6" height="21.0" fill="#0a9ce9"/><rect x="1925.9" y="605.9" width="3.6" height="14.5" fill="#0a9ce9"/><rect x="1937.2" y="540.9" width="3.6" height="26.8" fill="#0a9ce9"/><rect x="1937.2" y="575.7" width="3.6" height="21.0" fill="#0a9ce9"/><rect x="1937.2" y="606.3" width="3.6" height="14.7" fill="#0a9ce9"/><rect x="1945.0" y="540.9" width="3.6" height="26.9" fill="#0a9ce9"/><rect x="1945.0" y="606.6" width="3.6" height="14.8" fill="#0a9ce9"/><rect x="1950.6" y="540.9" width="3.6" height="27.0" fill="#0a9ce9"/><rect x="1950.6" y="575.9" width="3.6" height="21.0" fill="#0a9ce9"/><rect x="1965.2" y="540.8" width="3.6" height="27.2" fill="#0a9ce9"/><rect x="1965.2" y="576.1" width="3.6" height="21.0" fill="#0a9ce9"/><rect x="1965.2" y="607.3" width="3.6" height="15.1" fill="#0a9ce9"/><rect x="1970.7" y="540.8" width="3.6" height="27.2" fill="#0a9ce9"/><rect x="1970.7" y="607.5" width="3.6" height="15.2" fill="#0a9ce9"/><rect x="1987.5" y="540.8" width="3.6" height="27.4" fill="#0a9ce9"/><rect x="1987.5" y="576.5" width="3.6" height="21.0" fill="#0a9ce9"/><rect x="1987.5" y="608.0" width="3.6" height="15.5" fill="#0a9ce9"/><rect x="1994.2" y="540.7" width="3.6" height="27.5" fill="#0a9ce9"/><rect x="1994.2" y="576.6" width="3.6" height="21.0" fill="#0a9ce9"/><rect x="2004.2" y="540.7" width="3.6" height="27.6" fill="#0a9ce9"/><rect x="2004.2" y="608.6" width="3.6" height="15.8" fill="#0a9ce9"/><rect x="2012.2" y="540.7" width="3.6" height="27.7" fill="#0a9ce9"/><rect x="2012.2" y="576.9" width="3.6" height="21.0" fill="#0a9ce9"/><rect x="2012.2" y="608.9" width="3.6" height="15.9" fill="#0a9ce9"/><rect x="2028.9" y="540.6" width="3.6" height="28.0" fill="#0a9ce9"/><rect x="2028.9" y="577.2" width="3.6" height="21.0" fill="#0a9ce9"/><rect x="2028.9" y="609.5" width="3.6" height="16.2" fill="#0a9ce9"/><rect x="2043.2" y="540.6" width="3.6" height="28.1" fill="#0a9ce9"/><rect x="2050.2" y="540.6" width="3.6" height="28.2" fill="#0a9ce9"/><rect x="2050.2" y="577.6" width="3.6" height="21.0" fill="#0a9ce9"/><rect x="2050.2" y="610.2" width="3.6" height="16.6" fill="#0a9ce9"/><rect x="2065.9" y="540.5" width="3.6" height="28.4" fill="#0a9ce9"/><rect x="2065.9" y="577.9" width="3.6" height="21.0" fill="#0a9ce9"/><rect x="2065.9" y="610.7" width="3.6" height="16.9" fill="#0a9ce9"/><polygon points="1473,546.4 1790,541.4 2076,540 2076,544 1790,545 1473,550" fill="#b9b9b9" /><polygon points="1360,537 1473,535.7 1790,532.9 2233,533.5 2233,540 1790,541.4 1473,546.4 1360,546" fill="#0a84cb" /><polygon points="1360,538 1471.4,538 1475.7,705.7 1442,712.6 1367,700" fill="#0a8ad2" /><polygon points="1434,540 1471.4,538 1475.7,705.7 1442,712.6 1440,706" fill="#0b8fd9" /><polygon points="1434,598 1475,594 1475,600 1434,604" fill="#5a5a5a" /><polygon points="1434,601 1475,598 1475,604 1434,605" fill="#9e9e9e" /><polygon points="1436,655 1475,648 1475,656 1436,661" fill="#5a5a5a" /><polygon points="1436,659 1475,654 1475,661 1436,663" fill="#9e9e9e" /><polygon points="1442,712.6 1570,696 1570,702 1442,719" fill="#9a9a9a" /><rect x="1355" y="699" width="23" height="19" fill="#b6b6b6"/><rect x="1426" y="714" width="24" height="17" fill="#b6b6b6"/><rect x="1466" y="716" width="22" height="8" fill="#b6b6b6"/><rect x="1598" y="700" width="24" height="6" fill="#b6b6b6"/><rect x="1660" y="690" width="24" height="6" fill="#b6b6b6"/><polygon points="2040,588 2076,584 2076,594 2040,594" fill="#6a6a6a" /><polygon points="2040,632 2076,625 2076,646 2040,646" fill="#5a5a5a" /><polygon points="2037,695 2074,672.7 2076,697 2082,713 2037,702" fill="#5c5c5c" /><polygon points="2037,695 2082,700 2082,713 2037,706" fill="#c4c4c4" /><polygon points="2076,539 2197,539 2197,708 2074,697" fill="#05a2ee" /><rect x="2197.3" y="542" width="3.4" height="160" fill="#0a9ce9"/><rect x="2202.3" y="542" width="3.4" height="156" fill="#0a9ce9"/><rect x="2207.8" y="542" width="3.4" height="152" fill="#0a9ce9"/><rect x="2213.3" y="542" width="3.4" height="147" fill="#0a9ce9"/><rect x="2219.3" y="542" width="3.4" height="142" fill="#0a9ce9"/><rect x="2225.3" y="542" width="3.4" height="138" fill="#0a9ce9"/><rect x="2229.3" y="542" width="3.4" height="134" fill="#0a9ce9"/><polygon points="2197,591 2232,573 2232,578 2197,598" fill="#5a5a5a" /><polygon points="2197,640 2232,611.6 2232,616.6 2197,647" fill="#5a5a5a" /><polygon points="2197,687 2232,650 2232,655 2197,694" fill="#5a5a5a" /><polygon points="2197,539 2233,534 2233,540 2197,546" fill="#0a7fc0" /><rect x="2175" y="703" width="29" height="22" fill="#c8c8c8"/><rect x="2062" y="699" width="22" height="14" fill="#c4c4c4"/><rect x="1358.7" y="718.7" width="5.6" height="79.29999999999995" fill="#0a9ce9"/><rect x="1358.7" y="718.7" width="1.4" height="79.29999999999995" fill="#0a78c0"/><rect x="1366.2" y="719" width="5.6" height="81" fill="#0a9ce9"/><rect x="1366.2" y="719" width="1.4" height="81" fill="#0a78c0"/><rect x="1395.9" y="711" width="5.6" height="76.5" fill="#0a9ce9"/><rect x="1395.9" y="711" width="1.4" height="76.5" fill="#0a78c0"/><rect x="1403.2" y="712" width="5.6" height="77" fill="#0a9ce9"/><rect x="1403.2" y="712" width="1.4" height="77" fill="#0a78c0"/><rect x="1424.2" y="731" width="5.6" height="55" fill="#0a9ce9"/><rect x="1424.2" y="731" width="1.4" height="55" fill="#0a78c0"/><rect x="1429.2" y="732" width="5.6" height="87" fill="#0a9ce9"/><rect x="1429.2" y="732" width="1.4" height="87" fill="#0a78c0"/><rect x="1438.2" y="733" width="5.6" height="89" fill="#0a9ce9"/><rect x="1438.2" y="733" width="1.4" height="89" fill="#0a78c0"/><rect x="1464.2" y="723" width="5.6" height="83" fill="#0a9ce9"/><rect x="1464.2" y="723" width="1.4" height="83" fill="#0a78c0"/><rect x="1474.2" y="725" width="5.6" height="85" fill="#0a9ce9"/><rect x="1474.2" y="725" width="1.4" height="85" fill="#0a78c0"/><rect x="1486.2" y="715" width="5.6" height="53" fill="#0a9ce9"/><rect x="1486.2" y="715" width="1.4" height="53" fill="#0a78c0"/><rect x="1496.7" y="712" width="5.6" height="52" fill="#0a9ce9"/><rect x="1496.7" y="712" width="1.4" height="52" fill="#0a78c0"/><rect x="1545.8" y="705" width="5.6" height="45" fill="#0a9ce9"/><rect x="1545.8" y="705" width="1.4" height="45" fill="#0a78c0"/><rect x="1567.9" y="710" width="5.6" height="75" fill="#0a9ce9"/><rect x="1567.9" y="710" width="1.4" height="75" fill="#0a78c0"/><rect x="1577.2" y="710" width="5.6" height="73" fill="#0a9ce9"/><rect x="1577.2" y="710" width="1.4" height="73" fill="#0a78c0"/><rect x="1595.8" y="695" width="5.6" height="40" fill="#0a9ce9"/><rect x="1595.8" y="695" width="1.4" height="40" fill="#0a78c0"/><rect x="1602.9" y="695" width="5.6" height="55" fill="#0a9ce9"/><rect x="1602.9" y="695" width="1.4" height="55" fill="#0a78c0"/><rect x="1624.2" y="700" width="5.6" height="65" fill="#0a9ce9"/><rect x="1624.2" y="700" width="1.4" height="65" fill="#0a78c0"/><rect x="1631.2" y="700" width="5.6" height="62" fill="#0a9ce9"/><rect x="1631.2" y="700" width="1.4" height="62" fill="#0a78c0"/><rect x="1640.1" y="685" width="5.6" height="37" fill="#0a9ce9"/><rect x="1640.1" y="685" width="1.4" height="37" fill="#0a78c0"/><rect x="1671.2" y="690" width="5.6" height="58" fill="#0a9ce9"/><rect x="1671.2" y="690" width="1.4" height="58" fill="#0a78c0"/><rect x="1678.2" y="690" width="5.6" height="55" fill="#0a9ce9"/><rect x="1678.2" y="690" width="1.4" height="55" fill="#0a78c0"/><rect x="1684.2" y="690" width="5.6" height="55" fill="#0a9ce9"/><rect x="1684.2" y="690" width="1.4" height="55" fill="#0a78c0"/><rect x="1712.9" y="680" width="5.6" height="52" fill="#0a9ce9"/><rect x="1712.9" y="680" width="1.4" height="52" fill="#0a78c0"/><rect x="1718.2" y="680" width="5.6" height="50" fill="#0a9ce9"/><rect x="1718.2" y="680" width="1.4" height="50" fill="#0a78c0"/><rect x="1747.2" y="672" width="5.6" height="48" fill="#0a9ce9"/><rect x="1747.2" y="672" width="1.4" height="48" fill="#0a78c0"/><rect x="1754.2" y="672" width="5.6" height="46" fill="#0a9ce9"/><rect x="1754.2" y="672" width="1.4" height="46" fill="#0a78c0"/><rect x="1780.2" y="665" width="5.6" height="45" fill="#0a9ce9"/><rect x="1780.2" y="665" width="1.4" height="45" fill="#0a78c0"/><rect x="1813.0" y="660" width="5.6" height="40" fill="#0a9ce9"/><rect x="1813.0" y="660" width="1.4" height="40" fill="#0a78c0"/><rect x="1819.7" y="655" width="5.6" height="45" fill="#0a9ce9"/><rect x="1819.7" y="655" width="1.4" height="45" fill="#0a78c0"/><rect x="1860.0" y="655" width="5.6" height="51" fill="#0a9ce9"/><rect x="1860.0" y="655" width="1.4" height="51" fill="#0a78c0"/><rect x="1866.7" y="655" width="5.6" height="51" fill="#0a9ce9"/><rect x="1866.7" y="655" width="1.4" height="51" fill="#0a78c0"/><rect x="1909.2" y="650" width="5.6" height="62" fill="#0a9ce9"/><rect x="1909.2" y="650" width="1.4" height="62" fill="#0a78c0"/><rect x="1917.2" y="650" width="5.6" height="64" fill="#0a9ce9"/><rect x="1917.2" y="650" width="1.4" height="64" fill="#0a78c0"/><rect x="1963.0" y="660" width="5.6" height="58" fill="#0a9ce9"/><rect x="1963.0" y="660" width="1.4" height="58" fill="#0a78c0"/><rect x="1972.0" y="660" width="5.6" height="58" fill="#0a9ce9"/><rect x="1972.0" y="660" width="1.4" height="58" fill="#0a78c0"/><rect x="1979.8" y="665" width="5.6" height="55" fill="#0a9ce9"/><rect x="1979.8" y="665" width="1.4" height="55" fill="#0a78c0"/><rect x="2021.2" y="655" width="5.6" height="70" fill="#0a9ce9"/><rect x="2021.2" y="655" width="1.4" height="70" fill="#0a78c0"/><rect x="2030.2" y="655" width="5.6" height="70" fill="#0a9ce9"/><rect x="2030.2" y="655" width="1.4" height="70" fill="#0a78c0"/><rect x="2063.2" y="713" width="5.6" height="80" fill="#0a9ce9"/><rect x="2063.2" y="713" width="1.4" height="80" fill="#0a78c0"/><rect x="2068.2" y="713" width="5.6" height="82" fill="#0a9ce9"/><rect x="2068.2" y="713" width="1.4" height="82" fill="#0a78c0"/><rect x="2074.9" y="713" width="5.6" height="77" fill="#0a9ce9"/><rect x="2074.9" y="713" width="1.4" height="77" fill="#0a78c0"/><rect x="2081.2" y="715" width="5.6" height="70" fill="#0a9ce9"/><rect x="2081.2" y="715" width="1.4" height="70" fill="#0a78c0"/><rect x="2085.2" y="715" width="5.6" height="55" fill="#0a9ce9"/><rect x="2085.2" y="715" width="1.4" height="55" fill="#0a78c0"/><rect x="2175.7" y="725" width="5.6" height="85" fill="#0a9ce9"/><rect x="2175.7" y="725" width="1.4" height="85" fill="#0a78c0"/><rect x="2181.2" y="725" width="5.6" height="87" fill="#0a9ce9"/><rect x="2181.2" y="725" width="1.4" height="87" fill="#0a78c0"/><rect x="2187.2" y="725" width="5.6" height="90" fill="#0a9ce9"/><rect x="2187.2" y="725" width="1.4" height="90" fill="#0a78c0"/><rect x="2193.6" y="725" width="5.6" height="75" fill="#0a9ce9"/><rect x="2193.6" y="725" width="1.4" height="75" fill="#0a78c0"/><rect x="2198.2" y="720" width="5.6" height="50" fill="#0a9ce9"/><rect x="2198.2" y="720" width="1.4" height="50" fill="#0a78c0"/><rect x="2204.2" y="703" width="5.6" height="45" fill="#0a9ce9"/><rect x="2204.2" y="703" width="1.4" height="45" fill="#0a78c0"/><rect x="2210.2" y="703" width="5.6" height="42" fill="#0a9ce9"/><rect x="2210.2" y="703" width="1.4" height="42" fill="#0a78c0"/><rect x="2216.2" y="703" width="5.6" height="37" fill="#0a9ce9"/><rect x="2216.2" y="703" width="1.4" height="37" fill="#0a78c0"/></svg></div>
</body></html>
